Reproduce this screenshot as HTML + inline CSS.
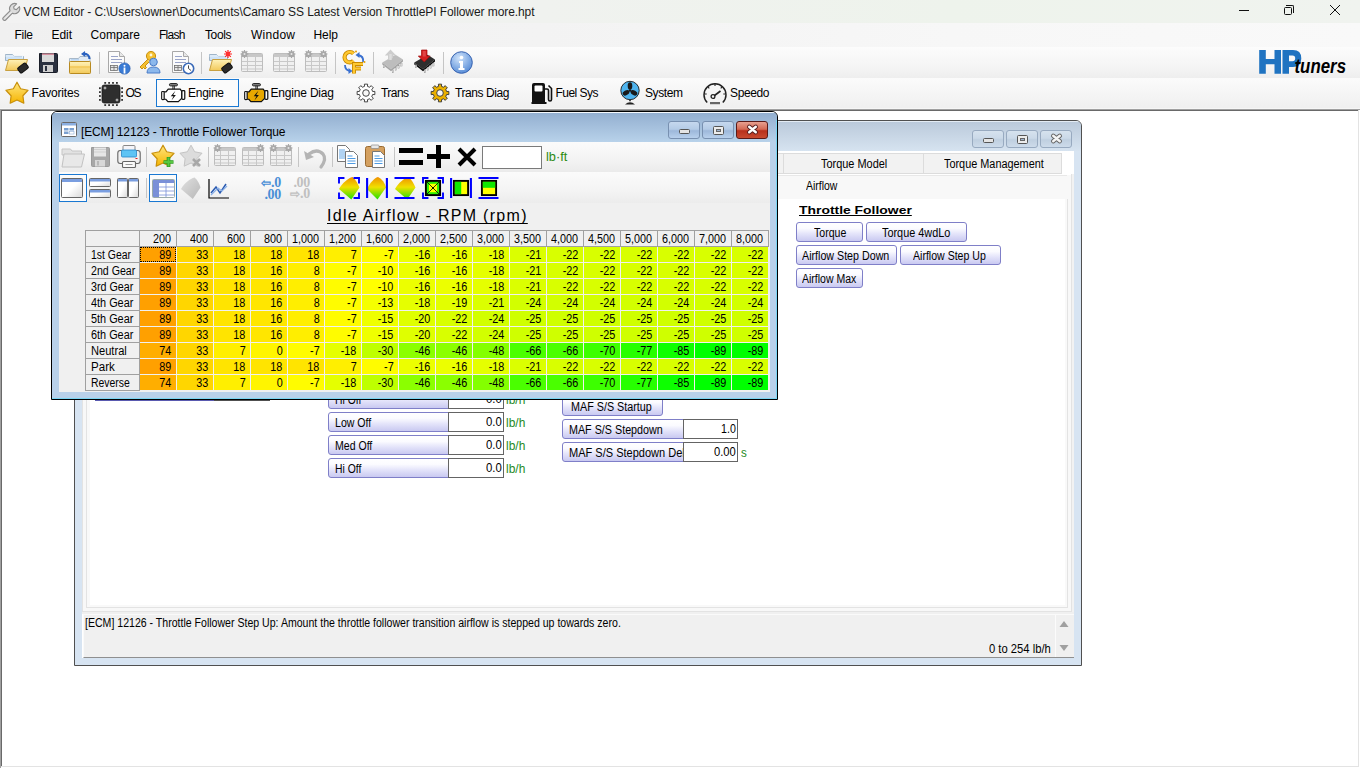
<!DOCTYPE html>
<html><head><meta charset="utf-8">
<style>
*{box-sizing:border-box}
html,body{margin:0;padding:0}
body{width:1360px;height:768px;overflow:hidden;position:relative;background:#fff;font-family:"Liberation Sans",sans-serif;color:#000}
.a{position:absolute}
.t12{font-size:12px;line-height:14px;white-space:nowrap}
.t11{font-size:11px;line-height:13px;white-space:nowrap}
svg{position:absolute;overflow:visible}
.sep{position:absolute;width:1px;background:#c5c5c5}
.btn{position:absolute;border:1px solid #7f7fc8;border-radius:3px;background:linear-gradient(#ffffff 0%,#fbfbff 30%,#e4e4fa 60%,#c9c9f1 100%);font-size:11px;line-height:17px;white-space:nowrap}
.lbl{position:absolute;border:1px solid #7f7fc8;border-radius:3px 0 0 3px;background:linear-gradient(#ffffff 0%,#fbfbff 30%,#e4e4fa 60%,#c9c9f1 100%);font-size:11px;line-height:17px;white-space:nowrap;padding-left:6px;overflow:hidden}
.inp{position:absolute;border:1px solid #646464;background:#fff;font-size:11px;line-height:15px;text-align:right;padding-right:3px;white-space:nowrap}
.unit{position:absolute;color:#1f8a1f;font-size:11px;line-height:14px;white-space:nowrap}
</style></head><body>
<svg width="0" height="0" style="position:absolute"><defs>
<linearGradient id="gfold" x1="0" y1="0" x2="0" y2="1"><stop offset="0" stop-color="#fff2b8"/><stop offset="1" stop-color="#f2c95a"/></linearGradient>
<linearGradient id="gfold2" x1="0" y1="0" x2="0" y2="1"><stop offset="0" stop-color="#ffe9a0"/><stop offset="1" stop-color="#f0c050"/></linearGradient>
<linearGradient id="gstar" x1="0" y1="0" x2="0" y2="1"><stop offset="0" stop-color="#ffe680"/><stop offset="1" stop-color="#f5b400"/></linearGradient>
<linearGradient id="gblue" x1="0" y1="0" x2="0" y2="1"><stop offset="0" stop-color="#a8c8f0"/><stop offset="1" stop-color="#3c78d0"/></linearGradient>
<linearGradient id="gthreed" x1="0" y1="0" x2="0" y2="1"><stop offset="0" stop-color="#f09000"/><stop offset="0.45" stop-color="#f0e000"/><stop offset="1" stop-color="#20e000"/></linearGradient>
<linearGradient id="ggray3d" x1="0" y1="0" x2="1" y2="1"><stop offset="0" stop-color="#e0e0e0"/><stop offset="1" stop-color="#b8b8b8"/></linearGradient>
<linearGradient id="gwin" x1="0" y1="0" x2="1" y2="1"><stop offset="0.5" stop-color="#ffffff"/><stop offset="1" stop-color="#d8d8d8"/></linearGradient>
<radialGradient id="ginfo" cx="0.4" cy="0.3" r="0.7"><stop offset="0" stop-color="#d0e4fb"/><stop offset="1" stop-color="#5b8fd8"/></radialGradient>
</defs></svg>
<!-- title bar -->
<div class="a" style="left:0;top:0;width:1360px;height:23px;background:linear-gradient(90deg,#f2f2f2 0%,#f0f2ef 40%,#eef3ec 70%,#f0f3ef 100%)"></div>
<svg style="left:1px;top:2px" width="20" height="20" viewBox="0 0 20 20"><path d="M2.2 15.6 L9 8.8 A5.2 5.2 0 0 1 15.6 1.8 L12.6 4.8 L13.2 7 L15.4 7.6 L18.4 4.6 A5.2 5.2 0 0 1 11.4 11.2 L4.6 18 A1.7 1.7 0 0 1 2.2 15.6 Z" fill="#dcdcdc" stroke="#8c8c8c" stroke-width="1.1" stroke-linejoin="round"/><path d="M4 16.5 L10.5 10" stroke="#f4f4f4" stroke-width="1"/></svg>
<div class="a" style="left:1239px;top:10px;width:10px;height:1px;background:#111"></div>
<div class="a" style="left:1284px;top:7px;width:8px;height:8px;border:1px solid #111;border-radius:1.5px"></div>
<div class="a" style="left:1286px;top:5px;width:8px;height:8px;border-top:1px solid #111;border-right:1px solid #111;border-top-right-radius:2px"></div>
<svg style="left:1330px;top:5px" width="10" height="10" viewBox="0 0 10 10"><path d="M0 0 L10 10 M10 0 L0 10" stroke="#111" stroke-width="1"/></svg>

<!-- menu bar -->
<div class="a" style="left:0;top:23px;width:1360px;height:24px;background:linear-gradient(90deg,#f0f0f0 0%,#f3f3f3 40%,#f7f7f7 70%,#f9f9f9 100%)"></div>

<!-- toolbar 1 -->
<div class="a" style="left:0;top:47px;width:1360px;height:31px;background:linear-gradient(#fcfcfc,#f5f5f5 60%,#eeeeee)"></div>
<!-- toolbar 2 -->
<div class="a" style="left:0;top:78px;width:1360px;height:31px;background:linear-gradient(#fbfbfb,#f4f4f4 60%,#efefef)"></div>
<div class="a" style="left:0;top:108px;width:1360px;height:1px;background:#f6f6f6"></div>
<div class="a" style="left:23.5px;top:5.0px;font:normal normal 12px/14px 'Liberation Sans',sans-serif;white-space:nowrap;letter-spacing:-0.077px;color:#1a1a1a;">VCM Editor - C:\Users\owner\Documents\Camaro SS Latest Version ThrottlePI Follower more.hpt</div><div class="a" style="left:14.5px;top:28.0px;font:normal normal 12px/14px 'Liberation Sans',sans-serif;white-space:nowrap;letter-spacing:-0.281px;">File</div><div class="a" style="left:51.5px;top:28.0px;font:normal normal 12px/14px 'Liberation Sans',sans-serif;white-space:nowrap;letter-spacing:-0.062px;">Edit</div><div class="a" style="left:90.5px;top:28.0px;font:normal normal 12px/14px 'Liberation Sans',sans-serif;white-space:nowrap;letter-spacing:0.023px;">Compare</div><div class="a" style="left:159.0px;top:28.0px;font:normal normal 12px/14px 'Liberation Sans',sans-serif;white-space:nowrap;letter-spacing:-0.711px;">Flash</div><div class="a" style="left:205.0px;top:28.0px;font:normal normal 12px/14px 'Liberation Sans',sans-serif;white-space:nowrap;letter-spacing:-0.379px;">Tools</div><div class="a" style="left:251.0px;top:28.0px;font:normal normal 12px/14px 'Liberation Sans',sans-serif;white-space:nowrap;letter-spacing:0.263px;">Window</div><div class="a" style="left:313.5px;top:28.0px;font:normal normal 12px/14px 'Liberation Sans',sans-serif;white-space:nowrap;letter-spacing:-0.062px;">Help</div><svg style="left:4px;top:50px" width="25" height="24" viewBox="0 0 25 24"><path d="M1.5 4.5 h7 l2 2 h9 v4 h-18 z" fill="#cfe3f7" stroke="#9fb4c8"/><path d="M1.5 6 h17 v2" fill="none" stroke="#eaf3fb"/><path d="M1.5 20.5 l3 -11 h19 l-3 11 z" fill="url(#gfold)" stroke="#c8a040"/><rect x="-5" y="-3.2" width="10" height="6.4" rx="1.5" fill="#2a2a2a" stroke="#111" transform="translate(19 18) rotate(-38)"/></svg>
<svg style="left:38px;top:52px" width="21" height="22" viewBox="0 0 21 22"><path d="M1.5 1.5 h17 a1 1 0 0 1 1 1 v17 a1 1 0 0 1 -1 1 h-16 a1 1 0 0 1 -1 -1 z" fill="#2b3140" stroke="#1a1e28"/><rect x="4" y="1.5" width="12" height="8.5" fill="#d9d9d9"/><rect x="4" y="1.5" width="12" height="1.5" fill="#d04060" opacity="0.5"/><rect x="5" y="13" width="10" height="7" fill="#cfcfcf"/><rect x="7" y="14" width="2" height="5" fill="#2b3140"/></svg>
<svg style="left:68px;top:51px" width="24" height="24" viewBox="0 0 24 24"><path d="M1.5 7.5 h9 l1.5 -2 h10 v6 h-20.5 z" fill="#dfeaf6" stroke="#a8b8c8"/><path d="M3 8.8 h8" stroke="#9cc4ec" stroke-width="0.8"/><rect x="1.5" y="10.5" width="21" height="12" rx="0.8" fill="url(#gfold)" stroke="#b88a20"/><rect x="2" y="15" width="20" height="2.2" fill="#f0c048" opacity="0.6"/><path d="M21.5 8 q0 -5.5 -6.5 -5" fill="none" stroke="#2a62c0" stroke-width="2.2"/><path d="M13 3 l4 -3 l0.3 6 z" fill="#2a62c0"/></svg>
<div class="sep" style="left:99px;top:52px;height:22px"></div><svg style="left:106px;top:50px" width="25" height="25" viewBox="0 0 25 25"><path d="M2.5 1.5 h11 l5 5 v16 h-16 z" fill="#fbfbfb" stroke="#a8a8a8"/><path d="M13.5 1.5 v5 h5" fill="#e8e8e8" stroke="#a8a8a8"/><g stroke="#9aa4c8" stroke-width="1"><path d="M5 6.5 h7 M5 9.5 h11 M5 12.5 h11"/></g><rect x="4.5" y="15.5" width="7" height="5" fill="#e6e6e6" stroke="#707070" stroke-width="0.8"/><path d="M4.5 17.5 h7 M8 15.5 v5" stroke="#707070" stroke-width="0.8"/><circle cx="18.5" cy="18.5" r="5.6" fill="#3a7bd5" stroke="#2a5eb0" stroke-width="0.8"/><rect x="17.6" y="17.5" width="1.8" height="6.04" fill="#fff"/><circle cx="18.5" cy="15.7" r="1" fill="#fff"/></svg>
<svg style="left:138px;top:50px" width="24" height="24" viewBox="0 0 24 24"><circle cx="13" cy="6" r="4.6" fill="#f5c030" stroke="#c89010"/><circle cx="13" cy="5" r="1.4" fill="#fff8d8"/><path d="M10 9 L2 17 l2 2 l1.5 -1.5 l1.5 1.5 l1.5 -1.5 l-1.5 -1.5 l4 -4" fill="#f5c030" stroke="#c89010" stroke-linejoin="round"/><circle cx="15.5" cy="12" r="3.8" fill="#8cb8ec" stroke="#4a7cc8"/><path d="M9 23 q0 -6 6.5 -6 q6.5 0 6.5 6 z" fill="#8cb8ec" stroke="#4a7cc8"/></svg>
<svg style="left:170px;top:50px" width="25" height="25" viewBox="0 0 25 25"><path d="M2.5 1.5 h11 l5 5 v16 h-16 z" fill="#fbfbfb" stroke="#a8a8a8"/><path d="M13.5 1.5 v5 h5" fill="#e8e8e8" stroke="#a8a8a8"/><g stroke="#9aa4c8" stroke-width="1"><path d="M5 6.5 h7 M5 9.5 h11 M5 12.5 h11"/></g><rect x="4.5" y="15.5" width="7" height="5" fill="#e6e6e6" stroke="#707070" stroke-width="0.8"/><path d="M4.5 17.5 h7 M8 15.5 v5" stroke="#707070" stroke-width="0.8"/><circle cx="18.5" cy="18.5" r="5.2" fill="#fff" stroke="#3a6ab8" stroke-width="1.6"/><path d="M18.5 15.379999999999999 V18.5 L21.1 20.58" stroke="#333" stroke-width="0.9" fill="none"/></svg>
<div class="sep" style="left:201px;top:52px;height:22px"></div><svg style="left:208px;top:50px" width="25" height="25" viewBox="0 0 25 25"><path d="M1.5 4.5 h7 l2 2 h9 v4 h-18 z" fill="#cfe3f7" stroke="#9fb4c8"/><path d="M1.5 6 h17 v2" fill="none" stroke="#eaf3fb"/><path d="M1.5 20.5 l3 -11 h19 l-3 11 z" fill="url(#gfold)" stroke="#c8a040"/><rect x="-5" y="-3.2" width="10" height="6.4" rx="1.5" fill="#2a2a2a" stroke="#111" transform="translate(19 18) rotate(-38)"/><g stroke="#ff2020" stroke-width="1.2"><path d="M20 0 v8 M16 4 h8 M17.2 1.2 l5.6 5.6 M22.8 1.2 l-5.6 5.6"/></g><circle cx="20" cy="4" r="2" fill="#ff3030"/></svg>
<svg style="left:240px;top:50px" width="24" height="24" viewBox="0 0 24 24"><rect x="1.5" y="3.5" width="21" height="18" rx="1" fill="#f0f0f0" stroke="#bdbdbd"/><rect x="2" y="4" width="20" height="3" fill="#c8c8c8"/><g stroke="#c8c8c8" stroke-width="1"><path d="M2 11.5 h20 M2 15.5 h20 M2 19 h20 M7.5 4 v17 M15.5 4 v17"/></g><circle cx="4.5" cy="4" r="2.6" fill="#b4b4b4" stroke="#999" stroke-width="0.6"/><g stroke="#a8a8a8" stroke-width="1.2"><path d="M0.5 4 h8 M4.5 0 v8 M1.7000000000000002 1.2000000000000002 l5.6 5.6 M7.3 1.2000000000000002 l-5.6 5.6"/></g><circle cx="4.5" cy="4" r="1" fill="#e8e8e8"/></svg>
<svg style="left:272px;top:50px" width="24" height="24" viewBox="0 0 24 24"><rect x="1.5" y="3.5" width="21" height="18" rx="1" fill="#f0f0f0" stroke="#bdbdbd"/><rect x="2" y="4" width="20" height="3" fill="#c8c8c8"/><g stroke="#c8c8c8" stroke-width="1"><path d="M2 11.5 h20 M2 15.5 h20 M2 19 h20 M7.5 4 v17 M15.5 4 v17"/></g><circle cx="19.5" cy="4" r="2.6" fill="#b4b4b4" stroke="#999" stroke-width="0.6"/><g stroke="#a8a8a8" stroke-width="1.2"><path d="M15.5 4 h8 M19.5 0 v8 M16.7 1.2000000000000002 l5.6 5.6 M22.3 1.2000000000000002 l-5.6 5.6"/></g><circle cx="19.5" cy="4" r="1" fill="#e8e8e8"/></svg>
<svg style="left:304px;top:50px" width="24" height="24" viewBox="0 0 24 24"><rect x="1.5" y="3.5" width="21" height="18" rx="1" fill="#f0f0f0" stroke="#bdbdbd"/><rect x="2" y="4" width="20" height="3" fill="#c8c8c8"/><g stroke="#c8c8c8" stroke-width="1"><path d="M2 11.5 h20 M2 15.5 h20 M2 19 h20 M7.5 4 v17 M15.5 4 v17"/></g><circle cx="4.5" cy="4" r="2.6" fill="#b4b4b4" stroke="#999" stroke-width="0.6"/><g stroke="#a8a8a8" stroke-width="1.2"><path d="M0.5 4 h8 M4.5 0 v8 M1.7000000000000002 1.2000000000000002 l5.6 5.6 M7.3 1.2000000000000002 l-5.6 5.6"/></g><circle cx="4.5" cy="4" r="1" fill="#e8e8e8"/><circle cx="19.5" cy="4" r="2.6" fill="#b4b4b4" stroke="#999" stroke-width="0.6"/><g stroke="#a8a8a8" stroke-width="1.2"><path d="M15.5 4 h8 M19.5 0 v8 M16.7 1.2000000000000002 l5.6 5.6 M22.3 1.2000000000000002 l-5.6 5.6"/></g><circle cx="19.5" cy="4" r="1" fill="#e8e8e8"/></svg>
<div class="sep" style="left:335px;top:52px;height:22px"></div><svg style="left:342px;top:50px" width="25" height="25" viewBox="0 0 25 25"><path d="M11.5 3.6 A5.2 5.2 0 1 0 11.5 10.8" fill="none" stroke="#c88a00" stroke-width="4.2"/><path d="M11.5 3.6 A5.2 5.2 0 1 0 11.5 10.8" fill="none" stroke="#ffc830" stroke-width="2.4"/><path d="M12 23.5 V14 H21 M12 18.5 H19" fill="none" stroke="#c88a00" stroke-width="4"/><path d="M12 23.5 V14 H21 M12 18.5 H19" fill="none" stroke="#ffc830" stroke-width="2.2"/><path d="M21 12 q1 -6 -5 -7" fill="none" stroke="#3a70d0" stroke-width="1.8"/><path d="M13.5 5 l4 -3 l0 6 z" fill="#3a70d0"/><path d="M3 15 q0 5 5 6" fill="none" stroke="#3a70d0" stroke-width="1.8"/><path d="M10.5 21 l-4 3 l0 -6 z" fill="#3a70d0"/><circle cx="14" cy="1.5" r="1" fill="#e8a000"/><circle cx="22.5" cy="12" r="1" fill="#e8a000"/></svg>
<div class="sep" style="left:373px;top:52px;height:22px"></div><svg style="left:381px;top:47px" width="24" height="26" viewBox="0 0 24 26"><path d="M1.3 15.5 L14.5 7.7 L22 12.6 L10 22.3 Z" fill="#bdbdbd"/><path d="M1.3 15.5 L10 22.3 V24.3 L1.3 17.5 Z" fill="#a4a4a4"/><path d="M10 22.3 L22 12.6 V14.6 L10 24.3 Z" fill="#a4a4a4"/><rect x="11.3" y="22.8" width="1.4" height="3" fill="#dedede" stroke="#9a9a9a" stroke-width="0.4"/><rect x="14.100000000000001" y="20.5" width="1.4" height="3" fill="#dedede" stroke="#9a9a9a" stroke-width="0.4"/><rect x="16.900000000000002" y="18.3" width="1.4" height="3" fill="#dedede" stroke="#9a9a9a" stroke-width="0.4"/><rect x="19.7" y="16.1" width="1.4" height="3" fill="#dedede" stroke="#9a9a9a" stroke-width="0.4"/><rect x="2.3" y="17.8" width="1.4" height="3" fill="#dedede" stroke="#9a9a9a" stroke-width="0.4"/><path d="M7 13 V8.5 H3.8 L9.5 2.5 L15.2 8.5 H12 V11 Z" fill="#cdcdcd"/><rect x="8.3" y="7" width="2.4" height="6" fill="#dedede"/></svg>
<svg style="left:413px;top:47px" width="24" height="26" viewBox="0 0 24 26"><path d="M1.3 15.5 L14.5 7.7 L22 12.6 L10 22.3 Z" fill="#2e2e2e"/><path d="M1.3 15.5 L10 22.3 V24.3 L1.3 17.5 Z" fill="#0a0a0a"/><path d="M10 22.3 L22 12.6 V14.6 L10 24.3 Z" fill="#0a0a0a"/><rect x="11.3" y="22.8" width="1.4" height="3" fill="#d8d8d8" stroke="#9a9a9a" stroke-width="0.4"/><rect x="14.100000000000001" y="20.5" width="1.4" height="3" fill="#d8d8d8" stroke="#9a9a9a" stroke-width="0.4"/><rect x="16.900000000000002" y="18.3" width="1.4" height="3" fill="#d8d8d8" stroke="#9a9a9a" stroke-width="0.4"/><rect x="19.7" y="16.1" width="1.4" height="3" fill="#d8d8d8" stroke="#9a9a9a" stroke-width="0.4"/><rect x="2.3" y="17.8" width="1.4" height="3" fill="#d8d8d8" stroke="#9a9a9a" stroke-width="0.4"/><path d="M8.5 3 h5.5 v6 h3.2 L11.25 15 L5.3 9 h3.2 Z" fill="#d42020" stroke="#a00c0c" stroke-width="0.7"/><rect x="9.8" y="4" width="3" height="5.5" fill="#e86060" opacity="0.6"/></svg>
<div class="sep" style="left:443px;top:52px;height:22px"></div><svg style="left:450px;top:51px" width="24" height="24" viewBox="0 0 24 24"><circle cx="11.5" cy="11.5" r="10.8" fill="url(#ginfo)" stroke="#3a64b0" stroke-width="1"/><circle cx="11.5" cy="6.5" r="1.8" fill="#fff"/><path d="M9 10 h4 v7 h1.5 v2 h-6 v-2 h1.5 v-5 h-1 z" fill="#fff"/></svg>
<svg style="left:0;top:0" width="1360" height="100" viewBox="0 0 1360 100"><path d="M1259.2 50.1 H1265.8 V58.9 H1274.5 V50.1 H1281 V73.8 H1274.5 V64.3 H1265.8 V73.8 H1259.2 Z" fill="#1f73c1"/><path d="M1282.5 50.1 H1293 Q1301.3 50.1 1301.3 58.5 Q1301.3 67 1293 67 H1289 V73.8 H1282.5 Z M1289 55.5 V61.2 H1292.5 Q1295.2 61.2 1295.2 58.35 Q1295.2 55.5 1292.5 55.5 Z" fill="#1f73c1" fill-rule="evenodd"/><text x="1294.5" y="73.4" font-family="Liberation Sans" font-weight="bold" font-style="italic" font-size="20" textLength="51.5" lengthAdjust="spacingAndGlyphs" fill="#000">tuners</text></svg><div class="a" style="left:156px;top:79px;width:83px;height:28px;border:1px solid #1a78d2;background:#fbfbfb"></div><svg style="left:5px;top:81px" width="24" height="24" viewBox="0 0 24 24"><polygon points="12.00,1.20 15.64,7.78 23.03,9.22 17.90,14.72 18.82,22.18 12.00,19.00 5.18,22.18 6.10,14.72 0.97,9.22 8.36,7.78" fill="url(#gstar)" stroke="#c8900c" stroke-width="1.2" stroke-linejoin="round"/></svg>
<div class="a" style="left:31.5px;top:86.0px;font:normal normal 12px/14px 'Liberation Sans',sans-serif;white-space:nowrap;letter-spacing:-0.170px;">Favorites</div><svg style="left:99px;top:82px" width="24" height="24" viewBox="0 0 24 24"><rect x="3" y="3" width="18" height="18" rx="2.2" fill="#2e2e2e" stroke="#1a1a1a" stroke-width="0.8"/><g fill="#333"><rect x="5.3" y="0" width="1.8" height="1.8"/><rect x="5.3" y="22.2" width="1.8" height="1.8"/><rect x="0" y="5.3" width="1.8" height="1.8"/><rect x="22.2" y="5.3" width="1.8" height="1.8"/><rect x="9.2" y="0" width="1.8" height="1.8"/><rect x="9.2" y="22.2" width="1.8" height="1.8"/><rect x="0" y="9.2" width="1.8" height="1.8"/><rect x="22.2" y="9.2" width="1.8" height="1.8"/><rect x="13.1" y="0" width="1.8" height="1.8"/><rect x="13.1" y="22.2" width="1.8" height="1.8"/><rect x="0" y="13.1" width="1.8" height="1.8"/><rect x="22.2" y="13.1" width="1.8" height="1.8"/><rect x="17.0" y="0" width="1.8" height="1.8"/><rect x="17.0" y="22.2" width="1.8" height="1.8"/><rect x="0" y="17.0" width="1.8" height="1.8"/><rect x="22.2" y="17.0" width="1.8" height="1.8"/></g><path d="M6 4.6 v2.8 M4.6 6 h2.8 M18 16.6 v2.8 M16.6 18 h2.8" stroke="#e0e0e0" stroke-width="0.9"/></svg>
<div class="a" style="left:125.5px;top:86.0px;font:normal normal 12px/14px 'Liberation Sans',sans-serif;white-space:nowrap;letter-spacing:-1.344px;">OS</div><svg style="left:161px;top:83px" width="25" height="20" viewBox="0 0 22.5 19.5" preserveAspectRatio="none"><path d="M2.5 8.7 H4.5 L6.5 6 H17.3 L18.6 8 V15 L15.6 18.2 H6.2 L4.2 15.8 H2.5 Z" fill="#ffffff" stroke="#111" stroke-width="1.1" stroke-linejoin="round"/><rect x="0.6" y="8.2" width="2.2" height="8" rx="0.8" fill="#fff" stroke="#111" stroke-width="1"/><rect x="18.8" y="7.4" width="2.6" height="8.6" rx="0.8" fill="#fff" stroke="#111" stroke-width="1.1"/><rect x="7.6" y="0.6" width="7.2" height="2.2" rx="1" fill="#8a8a8a" stroke="#111" stroke-width="0.9"/><path d="M10.7 2.8 V6 M12 2.8 V6" stroke="#111" stroke-width="0.8"/><path d="M13 7.6 L8.8 12.8 H11.2 L9.4 17 L13.4 11.6 H11 Z" fill="#111"/></svg><div class="a" style="left:188.0px;top:86.0px;font:normal normal 12px/14px 'Liberation Sans',sans-serif;white-space:nowrap;letter-spacing:-0.275px;">Engine</div><svg style="left:243.5px;top:83px" width="25" height="20" viewBox="0 0 22.5 19.5" preserveAspectRatio="none"><path d="M2.5 8.7 H4.5 L6.5 6 H17.3 L18.6 8 V15 L15.6 18.2 H6.2 L4.2 15.8 H2.5 Z" fill="#e8a800" stroke="#111" stroke-width="1.1" stroke-linejoin="round"/><rect x="0.6" y="8.2" width="2.2" height="8" rx="0.8" fill="#fff" stroke="#111" stroke-width="1"/><rect x="18.8" y="7.4" width="2.6" height="8.6" rx="0.8" fill="#fff" stroke="#111" stroke-width="1.1"/><rect x="7.6" y="0.6" width="7.2" height="2.2" rx="1" fill="#8a8a8a" stroke="#111" stroke-width="0.9"/><path d="M10.7 2.8 V6 M12 2.8 V6" stroke="#111" stroke-width="0.8"/><path d="M13 7.6 L8.8 12.8 H11.2 L9.4 17 L13.4 11.6 H11 Z" fill="#111"/></svg><div class="a" style="left:270.5px;top:86.0px;font:normal normal 12px/14px 'Liberation Sans',sans-serif;white-space:nowrap;letter-spacing:-0.189px;">Engine Diag</div><svg style="left:357px;top:84px" width="18" height="18" viewBox="0 0 18 18"><polygon points="17.85,7.39 17.85,10.61 15.65,10.44 14.72,12.68 16.40,14.12 14.12,16.40 12.68,14.72 10.44,15.65 10.61,17.85 7.39,17.85 7.56,15.65 5.32,14.72 3.88,16.40 1.60,14.12 3.28,12.68 2.35,10.44 0.15,10.61 0.15,7.39 2.35,7.56 3.28,5.32 1.60,3.88 3.88,1.60 5.32,3.28 7.56,2.35 7.39,0.15 10.61,0.15 10.44,2.35 12.68,3.28 14.12,1.60 16.40,3.88 14.72,5.32 15.65,7.56" fill="#ffffff" stroke="#333" stroke-width="0.9" stroke-linejoin="round"/><circle cx="9" cy="9" r="3.3" fill="#f8f8f8" stroke="#333" stroke-width="0.9"/></svg>
<div class="a" style="left:381.0px;top:86.0px;font:normal normal 12px/14px 'Liberation Sans',sans-serif;white-space:nowrap;letter-spacing:-0.559px;">Trans</div><svg style="left:431px;top:84px" width="18" height="18" viewBox="0 0 18 18"><polygon points="17.85,7.39 17.85,10.61 15.65,10.44 14.72,12.68 16.40,14.12 14.12,16.40 12.68,14.72 10.44,15.65 10.61,17.85 7.39,17.85 7.56,15.65 5.32,14.72 3.88,16.40 1.60,14.12 3.28,12.68 2.35,10.44 0.15,10.61 0.15,7.39 2.35,7.56 3.28,5.32 1.60,3.88 3.88,1.60 5.32,3.28 7.56,2.35 7.39,0.15 10.61,0.15 10.44,2.35 12.68,3.28 14.12,1.60 16.40,3.88 14.72,5.32 15.65,7.56" fill="#eab000" stroke="#333" stroke-width="0.9" stroke-linejoin="round"/><circle cx="9" cy="9" r="3.3" fill="#f8f8f8" stroke="#333" stroke-width="0.9"/></svg>
<div class="a" style="left:455.0px;top:86.0px;font:normal normal 12px/14px 'Liberation Sans',sans-serif;white-space:nowrap;letter-spacing:-0.417px;">Trans Diag</div><svg style="left:530px;top:82px" width="23" height="23" viewBox="0 0 23 23"><path d="M2 3 a2 2 0 0 1 2 -2 h9 a2 2 0 0 1 2 2 v17 h1.5 v2 h-15 v-2 h0.5 z" fill="#111"/><rect x="4.5" y="3.5" width="8" height="6" rx="1" fill="#fff"/><path d="M15 7 h2 a1.5 1.5 0 0 1 1.5 1.5 v9 a1.5 1.5 0 0 0 3 0 v-11 l-3 -3" fill="none" stroke="#111" stroke-width="1.6"/></svg>
<div class="a" style="left:555.5px;top:86.0px;font:normal normal 12px/14px 'Liberation Sans',sans-serif;white-space:nowrap;letter-spacing:-0.527px;">Fuel Sys</div><svg style="left:620px;top:81px" width="20" height="24" viewBox="0 0 20 24"><circle cx="10" cy="9.5" r="9.2" fill="#4fb4ee" stroke="#1a1a1a" stroke-width="0.9"/><ellipse cx="10" cy="4.9" rx="2.3" ry="3.6" fill="#1a1a1a" transform="rotate(0 10 9.5)"/><ellipse cx="10" cy="4.9" rx="2.3" ry="3.6" fill="#1a1a1a" transform="rotate(120 10 9.5)"/><ellipse cx="10" cy="4.9" rx="2.3" ry="3.6" fill="#1a1a1a" transform="rotate(240 10 9.5)"/><circle cx="10" cy="9.5" r="1.3" fill="#1a1a1a"/><path d="M10 18.7 v1.5" stroke="#222" stroke-width="1.6"/><path d="M5 23.5 q5 -4.5 10 0 z" fill="#222"/></svg>
<div class="a" style="left:645.0px;top:86.0px;font:normal normal 12px/14px 'Liberation Sans',sans-serif;white-space:nowrap;letter-spacing:-0.403px;">System</div><svg style="left:703px;top:82px" width="24" height="24" viewBox="0 0 24 24"><path d="M4.2 20.5 A11 11 0 1 1 19.8 20.5" fill="none" stroke="#222" stroke-width="1.5"/><g stroke="#222" stroke-width="1.1"><path d="M12 1.8 v2.2 M4.8 4.8 l1.5 1.5 M19.2 4.8 l-1.5 1.5 M1.5 12 h2.2 M22.5 12 h-2.2"/></g><circle cx="10" cy="14.5" r="1.9" fill="none" stroke="#222" stroke-width="1.3"/><path d="M11.5 13.5 l6 -4.5" stroke="#222" stroke-width="1.6"/><rect x="7" y="20" width="10" height="2.2" fill="#666"/></svg>
<div class="a" style="left:730.0px;top:86.0px;font:normal normal 12px/14px 'Liberation Sans',sans-serif;white-space:nowrap;letter-spacing:-0.375px;">Speedo</div><div class="a" style="left:0;top:109px;width:1360px;height:1px;background:#a0a0a0"></div><div class="a" style="left:0;top:110px;width:1359px;height:1px;background:#696969"></div><div class="a" style="left:0;top:109px;width:1px;height:659px;background:#a0a0a0"></div><div class="a" style="left:1px;top:110px;width:1px;height:657px;background:#696969"></div><div class="a" style="left:1358px;top:110px;width:1px;height:657px;background:#e3e3e3"></div><div class="a" style="left:1px;top:766px;width:1358px;height:1px;background:#e3e3e3"></div><div class="a" style="left:74px;top:120px;width:1008px;height:546px;border:1px solid #505050;border-radius:6px 6px 0 0;background:#d7e4f2;overflow:hidden"><div class="a" style="left:0;top:0;width:1006px;height:1px;background:#e4ecf4"></div><div class="a" style="left:0;top:1px;width:1006px;height:29px;background:linear-gradient(#bbcadb,#d6e3f0)"></div></div><div class="a" style="left:972px;top:130px;width:32px;height:18px;border:1px solid #98aac0;border-radius:3px;background:linear-gradient(#d6e2ee 0%,#cbd9e8 45%,#bfcfe0 55%,#cddbea 100%)"><div class="a" style="left:10px;top:7px;width:11px;height:5px;border:1px solid #555;border-radius:1.5px;background:#e4e4e4"></div></div><div class="a" style="left:1006px;top:130px;width:32px;height:18px;border:1px solid #98aac0;border-radius:3px;background:linear-gradient(#d6e2ee 0%,#cbd9e8 45%,#bfcfe0 55%,#cddbea 100%)"><div class="a" style="left:10px;top:4px;width:11px;height:9px;border:1px solid #555;border-radius:1.5px;background:#ececec"><div class="a" style="left:2px;top:2px;width:5px;height:3px;border:1px solid #666;background:#9fb4d0"></div></div></div><div class="a" style="left:1040px;top:130px;width:32px;height:18px;border:1px solid #98aac0;border-radius:3px;background:linear-gradient(#d6e2ee 0%,#cbd9e8 45%,#bfcfe0 55%,#cddbea 100%)"><svg style="left:10px;top:3px" width="11" height="9" viewBox="0 0 11 9"><path d="M2.2 1.8 L8.8 7.2 M8.8 1.8 L2.2 7.2" stroke="#666" stroke-width="4.4" stroke-linecap="round"/><path d="M2.2 1.8 L8.8 7.2 M8.8 1.8 L2.2 7.2" stroke="#f4f4f4" stroke-width="2.4" stroke-linecap="round"/></svg></div><div class="a" style="left:82px;top:151px;width:992px;height:507px;background:#fff"></div><div class="a" style="left:82px;top:174px;width:990px;height:438px;background:#f8f8f8;border:1px solid #e3e3e3;border-top:none"></div><div class="a" style="left:1072px;top:174px;width:2px;height:440px;background:#f2f2f2"></div><div class="a" style="left:82px;top:612px;width:992px;height:2px;background:#f0f0f0"></div><div class="a" style="left:82px;top:153px;width:980px;height:21px;background:#f2f2f2;border-top:1px solid #dcdcdc;border-bottom:1px solid #dcdcdc"></div><div class="a" style="left:783px;top:154px;width:1px;height:19px;background:#dcdcdc"></div><div class="a" style="left:923px;top:154px;width:1px;height:19px;background:#dcdcdc"></div><div class="a" style="left:1061px;top:154px;width:1px;height:19px;background:#dcdcdc"></div><div class="a" style="left:821.0px;top:157.0px;font:normal normal 12px/14px 'Liberation Sans',sans-serif;white-space:nowrap;transform:scaleX(0.9117);transform-origin:0 0;">Torque Model</div><div class="a" style="left:943.5px;top:157.0px;font:normal normal 12px/14px 'Liberation Sans',sans-serif;white-space:nowrap;transform:scaleX(0.9066);transform-origin:0 0;">Torque Management</div><div class="a" style="left:83px;top:174px;width:988px;height:1px;background:#fff"></div><div class="a" style="left:83px;top:175px;width:984px;height:24px;background:#f8f8f8;border-top:1px solid #e8e8e8"></div><div class="a" style="left:806.0px;top:179.0px;font:normal normal 12px/14px 'Liberation Sans',sans-serif;white-space:nowrap;transform:scaleX(0.8691);transform-origin:0 0;">Airflow</div><div class="a" style="left:86px;top:199px;width:982px;height:409px;background:#f9f9f9;border:1px solid #e3e3e3;border-top:none"></div><div class="a" style="left:90px;top:199px;width:975px;height:406px;background:#fff"></div><div class="a" style="left:799.0px;top:203.5px;font:normal bold 11.5px/13.5px 'Liberation Sans',sans-serif;white-space:nowrap;text-decoration:underline;text-decoration-skip-ink:none;transform:scaleX(1.2092);transform-origin:0 0;">Throttle Follower</div><div class="btn" style="left:796px;top:222px;width:67px;height:20px"></div><div class="a" style="left:813.5px;top:226.0px;font:normal normal 12px/14px 'Liberation Sans',sans-serif;white-space:nowrap;transform:scaleX(0.8800);transform-origin:0 0;">Torque</div><div class="btn" style="left:866px;top:222px;width:101px;height:20px"></div><div class="a" style="left:881.5px;top:226.0px;font:normal normal 12px/14px 'Liberation Sans',sans-serif;white-space:nowrap;transform:scaleX(0.9059);transform-origin:0 0;">Torque 4wdLo</div><div class="btn" style="left:796px;top:245px;width:101px;height:20px"></div><div class="a" style="left:801.5px;top:249.0px;font:normal normal 12px/14px 'Liberation Sans',sans-serif;white-space:nowrap;transform:scaleX(0.8904);transform-origin:0 0;">Airflow Step Down</div><div class="btn" style="left:900px;top:245px;width:101px;height:20px"></div><div class="a" style="left:913.0px;top:249.0px;font:normal normal 12px/14px 'Liberation Sans',sans-serif;white-space:nowrap;transform:scaleX(0.8803);transform-origin:0 0;">Airflow Step Up</div><div class="btn" style="left:796px;top:268px;width:67px;height:20px"></div><div class="a" style="left:801.5px;top:272.0px;font:normal normal 12px/14px 'Liberation Sans',sans-serif;white-space:nowrap;transform:scaleX(0.8756);transform-origin:0 0;">Airflow Max</div><div class="a" style="left:95px;top:399px;width:119px;height:2px;background:#5a5ab0"></div><div class="a" style="left:214px;top:399px;width:56px;height:2px;background:#505050"></div><div class="lbl" style="left:328px;top:389px;width:121px;height:20px"></div><div class="a" style="left:329px;top:390px;width:119px;height:18px;overflow:hidden"><div class="a" style="left:6.0px;top:3.0px;font:normal normal 12px/14px 'Liberation Sans',sans-serif;white-space:nowrap;transform:scaleX(0.8636);transform-origin:0 0;">Hi Off</div></div><div class="inp" style="left:448px;top:389px;width:56px;height:20px"></div><div class="a" style="left:485.5px;top:391.5px;font:normal normal 12px/14px 'Liberation Sans',sans-serif;white-space:nowrap;transform:scaleX(0.9468);transform-origin:0 0;">0.0</div><div class="a" style="left:506.0px;top:392.5px;font:normal normal 12px/14px 'Liberation Sans',sans-serif;white-space:nowrap;color:#1e8a1e;transform:scaleX(0.9969);transform-origin:0 0;">lb/h</div><div class="lbl" style="left:328px;top:412px;width:121px;height:20px"></div><div class="a" style="left:329px;top:413px;width:119px;height:18px;overflow:hidden"><div class="a" style="left:6.0px;top:3.0px;font:normal normal 12px/14px 'Liberation Sans',sans-serif;white-space:nowrap;transform:scaleX(0.8823);transform-origin:0 0;">Low Off</div></div><div class="inp" style="left:448px;top:412px;width:56px;height:20px"></div><div class="a" style="left:485.5px;top:414.5px;font:normal normal 12px/14px 'Liberation Sans',sans-serif;white-space:nowrap;transform:scaleX(0.9468);transform-origin:0 0;">0.0</div><div class="a" style="left:506.0px;top:415.5px;font:normal normal 12px/14px 'Liberation Sans',sans-serif;white-space:nowrap;color:#1e8a1e;transform:scaleX(0.9969);transform-origin:0 0;">lb/h</div><div class="lbl" style="left:328px;top:435px;width:121px;height:20px"></div><div class="a" style="left:329px;top:436px;width:119px;height:18px;overflow:hidden"><div class="a" style="left:6.0px;top:3.0px;font:normal normal 12px/14px 'Liberation Sans',sans-serif;white-space:nowrap;transform:scaleX(0.8783);transform-origin:0 0;">Med Off</div></div><div class="inp" style="left:448px;top:435px;width:56px;height:20px"></div><div class="a" style="left:485.5px;top:437.5px;font:normal normal 12px/14px 'Liberation Sans',sans-serif;white-space:nowrap;transform:scaleX(0.9468);transform-origin:0 0;">0.0</div><div class="a" style="left:506.0px;top:438.5px;font:normal normal 12px/14px 'Liberation Sans',sans-serif;white-space:nowrap;color:#1e8a1e;transform:scaleX(0.9969);transform-origin:0 0;">lb/h</div><div class="lbl" style="left:328px;top:458px;width:121px;height:20px"></div><div class="a" style="left:329px;top:459px;width:119px;height:18px;overflow:hidden"><div class="a" style="left:6.0px;top:3.0px;font:normal normal 12px/14px 'Liberation Sans',sans-serif;white-space:nowrap;transform:scaleX(0.8636);transform-origin:0 0;">Hi Off</div></div><div class="inp" style="left:448px;top:458px;width:56px;height:20px"></div><div class="a" style="left:485.5px;top:460.5px;font:normal normal 12px/14px 'Liberation Sans',sans-serif;white-space:nowrap;transform:scaleX(0.9468);transform-origin:0 0;">0.0</div><div class="a" style="left:506.0px;top:461.5px;font:normal normal 12px/14px 'Liberation Sans',sans-serif;white-space:nowrap;color:#1e8a1e;transform:scaleX(0.9969);transform-origin:0 0;">lb/h</div><div class="btn" style="left:562px;top:396px;width:101px;height:20px"></div><div class="a" style="left:571.0px;top:400.0px;font:normal normal 12px/14px 'Liberation Sans',sans-serif;white-space:nowrap;transform:scaleX(0.8975);transform-origin:0 0;">MAF S/S Startup</div><div class="lbl" style="left:562px;top:419px;width:122px;height:20px"></div><div class="a" style="left:563px;top:420px;width:120px;height:18px;overflow:hidden"><div class="a" style="left:6.0px;top:3.0px;font:normal normal 12px/14px 'Liberation Sans',sans-serif;white-space:nowrap;transform:scaleX(0.8957);transform-origin:0 0;">MAF S/S Stepdown</div></div><div class="inp" style="left:683px;top:419px;width:55px;height:20px"></div><div class="a" style="left:720.5px;top:421.5px;font:normal normal 12px/14px 'Liberation Sans',sans-serif;white-space:nowrap;transform:scaleX(0.8869);transform-origin:0 0;">1.0</div><div class="lbl" style="left:562px;top:442px;width:122px;height:20px"></div><div class="a" style="left:563px;top:443px;width:120px;height:18px;overflow:hidden"><div class="a" style="left:6.0px;top:3.0px;font:normal normal 12px/14px 'Liberation Sans',sans-serif;white-space:nowrap;transform:scaleX(0.9186);transform-origin:0 0;">MAF S/S Stepdown Del</div></div><div class="inp" style="left:683px;top:442px;width:55px;height:20px"></div><div class="a" style="left:713.5px;top:444.5px;font:normal normal 12px/14px 'Liberation Sans',sans-serif;white-space:nowrap;transform:scaleX(0.9332);transform-origin:0 0;">0.00</div><div class="a" style="left:740.5px;top:445.5px;font:normal normal 12px/14px 'Liberation Sans',sans-serif;white-space:nowrap;color:#1e8a1e;transform:scaleX(0.9667);transform-origin:0 0;">s</div><div class="a" style="left:83px;top:614px;width:991px;height:44px;background:#f0f0f0;border-top:1px solid #fafafa;border-left:1px solid #fafafa;border-bottom:1px solid #8f8f8f"></div><div class="a" style="left:1055px;top:615px;width:1px;height:42px;background:#fbfbfb"></div><div class="a" style="left:85.0px;top:616.0px;font:normal normal 12px/14px 'Liberation Sans',sans-serif;white-space:nowrap;transform:scaleX(0.8802);transform-origin:0 0;">[ECM] 12126 - Throttle Follower Step Up: Amount the throttle follower transition airflow is stepped up towards zero.</div><div class="a" style="left:989.0px;top:642.0px;font:normal normal 12px/14px 'Liberation Sans',sans-serif;white-space:nowrap;transform:scaleX(0.9355);transform-origin:0 0;">0 to 254 lb/h</div><svg style="left:1059px;top:620px" width="10" height="8" viewBox="0 0 10 8"><path d="M0.5 7 L5 1 L9.5 7 z" fill="#a0a0a0"/></svg><svg style="left:1059px;top:644px" width="10" height="8" viewBox="0 0 10 8"><path d="M0.5 1 L5 7 L9.5 1 z" fill="#a0a0a0"/></svg><div class="a" style="left:51px;top:111px;width:727px;height:289px;border:1px solid #000;border-radius:6px 6px 0 0;background:#b9d1ea;overflow:hidden"><div class="a" style="left:0;top:0;width:725px;height:1px;background:#f4f8fc"></div><div class="a" style="left:0;top:1px;width:725px;height:29px;background:linear-gradient(#93afd0,#b8d2ea)"></div><div class="a" style="left:724px;top:8px;width:1px;height:279px;background:#7ad6f4"></div><div class="a" style="left:0;top:286px;width:725px;height:1px;background:#7ad6f4"></div></div><svg style="left:61px;top:122px" width="16" height="15" viewBox="0 0 16 15"><rect x="0.5" y="0.5" width="15" height="14" rx="1" fill="#fff" stroke="#6a6a6a"/><rect x="1" y="1" width="14" height="2.5" fill="#8aaee0"/><rect x="3" y="6" width="4.5" height="2.5" fill="#7aa0d0"/><rect x="8.5" y="6" width="4.5" height="2.5" fill="#7aa0d0"/><rect x="3" y="9.5" width="4.5" height="2.5" fill="#7aa0d0"/><rect x="8.5" y="9.5" width="4.5" height="2.5" fill="#fff" stroke="#7aa0d0" stroke-width="0.5"/></svg><div class="a" style="left:81.0px;top:124.5px;font:normal normal 12px/14px 'Liberation Sans',sans-serif;white-space:nowrap;letter-spacing:-0.139px;">[ECM] 12123 - Throttle Follower Torque</div><div class="a" style="left:668px;top:121px;width:32px;height:18px;border:1px solid #7890b0;border-radius:3px;background:linear-gradient(#c6d8ee 0%,#b4cbe6 45%,#9db8da 55%,#b8d0ec 100%)"><div class="a" style="left:10px;top:7px;width:11px;height:5px;border:1px solid #555;border-radius:1.5px;background:#e4e4e4"></div></div><div class="a" style="left:702px;top:121px;width:32px;height:18px;border:1px solid #7890b0;border-radius:3px;background:linear-gradient(#c6d8ee 0%,#b4cbe6 45%,#9db8da 55%,#b8d0ec 100%)"><div class="a" style="left:10px;top:4px;width:11px;height:9px;border:1px solid #555;border-radius:1.5px;background:#ececec"><div class="a" style="left:2px;top:2px;width:5px;height:3px;border:1px solid #666;background:#9fb4d0"></div></div></div><div class="a" style="left:736px;top:121px;width:32px;height:18px;border:1px solid #5a1a18;border-radius:3px;background:linear-gradient(#e8a090 0%,#d46a55 45%,#b8301c 55%,#c84a30 100%)"><svg style="left:10px;top:3px" width="11" height="9" viewBox="0 0 11 9"><path d="M2.2 1.8 L8.8 7.2 M8.8 1.8 L2.2 7.2" stroke="#5a2020" stroke-width="4.4" stroke-linecap="round"/><path d="M2.2 1.8 L8.8 7.2 M8.8 1.8 L2.2 7.2" stroke="#fff" stroke-width="2.4" stroke-linecap="round"/></svg></div><div class="a" style="left:59px;top:142px;width:711px;height:30px;background:linear-gradient(#fbfbfb,#f3f3f3 60%,#ebebeb)"></div><div class="a" style="left:59px;top:172px;width:711px;height:31px;background:linear-gradient(#fbfbfb,#f4f4f4 60%,#ececec)"></div><div class="a" style="left:59px;top:203px;width:711px;height:189px;background:#f0f0f0"></div><svg style="left:61px;top:146px" width="25" height="23" viewBox="0 0 25 23"><path d="M1 3 h8.5 l1.5 2 h9.5 v4 h-19.5 z" fill="#e2e2e2" stroke="#c6c6c6" stroke-linejoin="round"/><path d="M1 21 l2 -13 h20.5 l-3 13 z" fill="#e8e8e8" stroke="#c2c2c2" stroke-linejoin="round"/></svg>
<svg style="left:90px;top:146px" width="21" height="22" viewBox="0 0 21 22"><path d="M1.5 1.5 h17 a1 1 0 0 1 1 1 v17 a1 1 0 0 1 -1 1 h-16 a1 1 0 0 1 -1 -1 z" fill="#a8a8a8" stroke="#9a9a9a"/><rect x="4" y="1.5" width="12" height="9" fill="#e6e6e6"/><rect x="4" y="3" width="12" height="1" fill="#d0d0d0"/><rect x="4" y="5.5" width="12" height="1" fill="#d0d0d0"/><rect x="5" y="14" width="10" height="6.5" fill="#d8d8d8"/><rect x="7" y="15" width="2" height="4.5" fill="#b8b8b8"/></svg>
<svg style="left:117px;top:145px" width="24" height="23" viewBox="0 0 24 23"><rect x="6" y="0.5" width="12" height="7" rx="1" fill="#f4f4f8" stroke="#888"/><rect x="0.8" y="5.5" width="22.4" height="13" rx="2.5" fill="#f0f0f0" stroke="#666" stroke-width="1.1"/><rect x="4.5" y="5" width="15" height="7" rx="1" fill="#5ec4f4" stroke="#2a86c8" stroke-width="0.8"/><rect x="18.5" y="13" width="2" height="1" fill="#e02020"/><rect x="5.5" y="16.5" width="13" height="6" rx="1" fill="#fafafa" stroke="#666" stroke-width="1.1"/><path d="M8.5 19.5 h7" stroke="#999"/></svg>
<div class="sep" style="left:146px;top:147px;height:20px"></div><svg style="left:151px;top:144px" width="24" height="24" viewBox="0 0 24 24"><polygon points="12.00,1.20 15.64,7.78 23.03,9.22 17.90,14.72 18.82,22.18 12.00,19.00 5.18,22.18 6.10,14.72 0.97,9.22 8.36,7.78" fill="url(#gstar)" stroke="#c8900c" stroke-width="1.2" stroke-linejoin="round"/><path d="M17.5 13 v10 M12.5 18 h10" stroke="#2a9a20" stroke-width="3.6"/><path d="M17.5 13.5 v9 M13 18 h9" stroke="#56c840" stroke-width="2"/></svg>
<svg style="left:179px;top:144px" width="24" height="24" viewBox="0 0 24 24"><polygon points="12.00,1.20 15.64,7.78 23.03,9.22 17.90,14.72 18.82,22.18 12.00,19.00 5.18,22.18 6.10,14.72 0.97,9.22 8.36,7.78" fill="#dcdcdc" stroke="#c4c4c4" stroke-linejoin="round"/><path d="M14 15 l7 7 M21 15 l-7 7" stroke="#a8a8a8" stroke-width="2.6"/></svg>
<div class="sep" style="left:208px;top:147px;height:20px"></div><svg style="left:213px;top:144px" width="24" height="24" viewBox="0 0 24 24"><rect x="1.5" y="3.5" width="21" height="18" rx="1" fill="#f0f0f0" stroke="#bdbdbd"/><rect x="2" y="4" width="20" height="3" fill="#c8c8c8"/><g stroke="#c8c8c8" stroke-width="1"><path d="M2 11.5 h20 M2 15.5 h20 M2 19 h20 M7.5 4 v17 M15.5 4 v17"/></g><circle cx="4.5" cy="4" r="2.6" fill="#b4b4b4" stroke="#999" stroke-width="0.6"/><g stroke="#a8a8a8" stroke-width="1.2"><path d="M0.5 4 h8 M4.5 0 v8 M1.7000000000000002 1.2000000000000002 l5.6 5.6 M7.3 1.2000000000000002 l-5.6 5.6"/></g><circle cx="4.5" cy="4" r="1" fill="#e8e8e8"/></svg>
<svg style="left:241px;top:144px" width="24" height="24" viewBox="0 0 24 24"><rect x="1.5" y="3.5" width="21" height="18" rx="1" fill="#f0f0f0" stroke="#bdbdbd"/><rect x="2" y="4" width="20" height="3" fill="#c8c8c8"/><g stroke="#c8c8c8" stroke-width="1"><path d="M2 11.5 h20 M2 15.5 h20 M2 19 h20 M7.5 4 v17 M15.5 4 v17"/></g><circle cx="19.5" cy="4" r="2.6" fill="#b4b4b4" stroke="#999" stroke-width="0.6"/><g stroke="#a8a8a8" stroke-width="1.2"><path d="M15.5 4 h8 M19.5 0 v8 M16.7 1.2000000000000002 l5.6 5.6 M22.3 1.2000000000000002 l-5.6 5.6"/></g><circle cx="19.5" cy="4" r="1" fill="#e8e8e8"/></svg>
<svg style="left:269px;top:144px" width="24" height="24" viewBox="0 0 24 24"><rect x="1.5" y="3.5" width="21" height="18" rx="1" fill="#f0f0f0" stroke="#bdbdbd"/><rect x="2" y="4" width="20" height="3" fill="#c8c8c8"/><g stroke="#c8c8c8" stroke-width="1"><path d="M2 11.5 h20 M2 15.5 h20 M2 19 h20 M7.5 4 v17 M15.5 4 v17"/></g><circle cx="4.5" cy="4" r="2.6" fill="#b4b4b4" stroke="#999" stroke-width="0.6"/><g stroke="#a8a8a8" stroke-width="1.2"><path d="M0.5 4 h8 M4.5 0 v8 M1.7000000000000002 1.2000000000000002 l5.6 5.6 M7.3 1.2000000000000002 l-5.6 5.6"/></g><circle cx="4.5" cy="4" r="1" fill="#e8e8e8"/><circle cx="19.5" cy="4" r="2.6" fill="#b4b4b4" stroke="#999" stroke-width="0.6"/><g stroke="#a8a8a8" stroke-width="1.2"><path d="M15.5 4 h8 M19.5 0 v8 M16.7 1.2000000000000002 l5.6 5.6 M22.3 1.2000000000000002 l-5.6 5.6"/></g><circle cx="19.5" cy="4" r="1" fill="#e8e8e8"/></svg>
<div class="sep" style="left:298px;top:147px;height:20px"></div><svg style="left:303px;top:145px" width="24" height="24" viewBox="0 0 24 24"><path d="M6 9 q8 -6 14 0 q4 5 -2 13" fill="none" stroke="#b4b4b4" stroke-width="3.2" stroke-linecap="round"/><path d="M1 6 l2 9 l8 -3 z" fill="#b4b4b4"/></svg>
<div class="sep" style="left:332px;top:147px;height:20px"></div><svg style="left:337px;top:145px" width="24" height="24" viewBox="0 0 24 24"><path d="M0.5 0.5 h8 l4 4 v12 h-12 z" fill="#fff" stroke="#777"/><g stroke="#3a90e0" stroke-width="0.8"><path d="M2 5 h6 M2 7 h8 M2 9 h8 M2 11 h8 M2 13 h8"/></g><path d="M8.5 6.5 h8 l4 4 v12 h-12 z" fill="#fff" stroke="#777"/><g stroke="#3a90e0" stroke-width="0.9"><path d="M10.5 11 h5 M10.5 13.5 h8 M10.5 16 h8 M10.5 18.5 h8"/></g></svg>
<svg style="left:365px;top:145px" width="24" height="24" viewBox="0 0 24 24"><rect x="0.5" y="1.5" width="19" height="20" rx="2" fill="#d4a060" stroke="#9a6a30"/><rect x="6" y="0" width="8" height="3.5" rx="1" fill="#e8e8e8" stroke="#888" stroke-width="0.7"/><path d="M7.5 6.5 h8 l4 4 v12 h-12 z" fill="#fff" stroke="#777"/><g stroke="#3a90e0" stroke-width="0.9"><path d="M9.5 11 h5 M9.5 13.5 h8 M9.5 16 h8 M9.5 18.5 h8"/></g></svg>
<div class="sep" style="left:394px;top:147px;height:20px"></div><div class="a" style="left:399px;top:148px;width:24px;height:5px;background:#000"></div><div class="a" style="left:399px;top:160px;width:24px;height:5px;background:#000"></div><div class="a" style="left:427px;top:153.5px;width:23px;height:5px;background:#000"></div><div class="a" style="left:436px;top:145px;width:5px;height:23px;background:#000"></div><svg style="left:457px;top:148px" width="20" height="18" viewBox="0 0 20 18"><path d="M2 1 L18 17 M18 1 L2 17" stroke="#000" stroke-width="4"/></svg><div class="a" style="left:482px;top:146px;width:60px;height:23px;border:1px solid #7a7a7a;background:#fff"></div><div class="a" style="left:546.0px;top:150.0px;font:normal normal 12px/14px 'Liberation Sans',sans-serif;white-space:nowrap;color:#2a8a10;transform:scaleX(1.0642);transform-origin:0 0;">lb·ft</div><div class="a" style="left:59px;top:174px;width:28px;height:28px;border:1px solid #1a78d2;background:#fbfbfb"></div><div class="a" style="left:149px;top:174px;width:28px;height:28px;border:1px solid #1a78d2;background:#fbfbfb"></div><svg style="left:61px;top:178px" width="22" height="20" viewBox="0 0 22 20"><rect x="0.5" y="0.5" width="21" height="19" rx="1" fill="url(#gwin)" stroke="#666"/><rect x="1" y="1" width="20" height="3" fill="#7a9ee0"/></svg>
<svg style="left:89px;top:178px" width="22" height="20" viewBox="0 0 22 20"><rect x="0.5" y="0.5" width="21" height="8" rx="1" fill="url(#gwin)" stroke="#666"/><rect x="1" y="1" width="20" height="2.5" fill="#7a9ee0"/><rect x="0.5" y="11.5" width="21" height="8" rx="1" fill="url(#gwin)" stroke="#666"/><rect x="1" y="12" width="20" height="2.5" fill="#7a9ee0"/></svg>
<svg style="left:117px;top:178px" width="22" height="20" viewBox="0 0 22 20"><rect x="0.5" y="0.5" width="10" height="19" rx="1" fill="url(#gwin)" stroke="#666"/><rect x="1" y="1" width="9" height="2.5" fill="#7a9ee0"/><rect x="11.5" y="0.5" width="10" height="19" rx="1" fill="url(#gwin)" stroke="#666"/><rect x="12" y="1" width="9" height="2.5" fill="#7a9ee0"/></svg>
<div class="sep" style="left:146px;top:178px;height:20px"></div><svg style="left:152px;top:179px" width="23" height="19" viewBox="0 0 23 19"><rect x="0.5" y="0.5" width="22" height="18" rx="1" fill="#fff" stroke="#9aa"/><rect x="1" y="1" width="21" height="3" fill="#7a90d8"/><rect x="1" y="1" width="6" height="17" fill="#7a90d8"/><g stroke="#7a90d8" stroke-width="0.8"><path d="M1 8 h21 M1 12 h21 M1 16 h21 M14 1 v17"/></g></svg>
<svg style="left:180px;top:177px" width="22" height="22" viewBox="0 0 22 22"><path d="M14.6 0.5 C10 1.5 4.5 6 1 12 L12.8 22 L20.5 10.4 C19.3 7 18 3.5 14.6 0.5 Z" fill="url(#ggray3d)"/></svg>
<svg style="left:208px;top:178px" width="22" height="22" viewBox="0 0 22 22"><path d="M1 1 v19 h20" fill="none" stroke="#000" stroke-width="1.2"/><path d="M3 15 l5 -6 l4 6 l6 -9" fill="none" stroke="#2a5ab0" stroke-width="1.5"/><path d="M3 17 l7 -7 l4 3 l5 -5" fill="none" stroke="#8ab0e8" stroke-width="1.2"/></svg>
<div class="a" style="left:257px;top:177px;width:24px;font:bold 14px/11px 'Liberation Serif',serif;color:#4a8fd6;text-align:right;white-space:nowrap;letter-spacing:-0.3px"><span style="font-size:12px">&#x21E6;</span>.0<br>.00</div><div class="a" style="left:286px;top:177px;width:24px;font:bold 14px/11px 'Liberation Serif',serif;color:#c0c0c0;text-align:right;white-space:nowrap;letter-spacing:-0.3px">.00<br><span style="font-size:12px">&#x21E8;</span>.0</div><svg style="left:338px;top:177px" width="22" height="22" viewBox="0 0 22 22"><path d="M14.6 0 C10 1 4.5 6 1 12 L13.3 22.5 L21.5 10.4 C19.8 7 18.2 3 14.6 0 Z" fill="url(#gthreed)"/><g stroke="#0000ff" stroke-width="1.9" fill="none" stroke-linecap="square"><path d="M1 5.5 V1 H5.5 M16.5 1 H21 V5.5 M1 16.5 V21 H5.5 M16.5 21 H21 V16.5"/></g></svg>
<svg style="left:366px;top:177px" width="22" height="22" viewBox="0 0 22 22"><path d="M12 0 C8 1 4 6 1 12 L11.5 22.5 L20 10.4 C19 6 16 2 12 0 Z" fill="url(#gthreed)"/><g stroke="#0000ff" stroke-width="2.1"><path d="M1.1 1 V21 M20.9 1 V21"/></g></svg>
<svg style="left:394px;top:177px" width="22" height="22" viewBox="0 0 22 22"><path d="M14.6 0 C10 1 4.5 6 1 12 L13.3 22.5 L21.5 10.4 C19.8 7 18.2 3 14.6 0 Z" fill="url(#gthreed)"/><g stroke="#0000ff" stroke-width="1.9"><path d="M0.5 1 H20.5 M0.5 21 H20.5"/></g></svg>
<svg style="left:422px;top:177px" width="22" height="22" viewBox="0 0 22 22"><rect x="3.9" y="3.9" width="14.2" height="14.2" fill="#30f000" stroke="#000" stroke-width="1.9"/><rect x="7" y="6.8" width="8" height="8.4" fill="#ffff00"/><path d="M5 5 L17 17 M17 5 L5 17" stroke="#000" stroke-width="0.8"/><circle cx="11" cy="11" r="0.9" fill="#000"/><g stroke="#0000ff" stroke-width="1.9" fill="none" stroke-linecap="square"><path d="M1 5.5 V1 H5.5 M16.5 1 H21 V5.5 M1 16.5 V21 H5.5 M16.5 21 H21 V16.5"/></g></svg>
<svg style="left:450px;top:177px" width="22" height="22" viewBox="0 0 22 22"><rect x="3.9" y="3.9" width="14.2" height="14.2" fill="#ffff00" stroke="#000" stroke-width="1.9"/><rect x="4.8" y="4.8" width="6.4" height="12.4" fill="#10e800"/><g stroke="#0000ff" stroke-width="2.1"><path d="M1.1 1 V21 M20.9 1 V21"/></g></svg>
<svg style="left:478px;top:177px" width="22" height="22" viewBox="0 0 22 22"><rect x="3.9" y="3.9" width="14.2" height="14.2" fill="#ffff00" stroke="#000" stroke-width="1.9"/><rect x="4.8" y="4.8" width="12.4" height="6" fill="#10e800"/><g stroke="#0000ff" stroke-width="1.9"><path d="M0.5 1 H20.5 M0.5 21 H20.5"/></g></svg>
<div class="a" style="left:327.0px;top:206.0px;font:normal normal 16px/19px 'Liberation Sans',sans-serif;white-space:nowrap;letter-spacing:1.291px;text-decoration:underline;text-decoration-skip-ink:none;text-underline-offset:1.5px;">Idle Airflow - RPM (rpm)</div><div class="a" style="left:85px;top:230px;width:684px;height:161px;background:#f0f0f0"></div><div class="a" style="left:85px;top:230px;width:55px;height:17px;border:1px solid #a0a0a0;background:#f0f0f0"></div><div class="a" style="left:139px;top:230px;width:38px;height:17px;border:1px solid #a0a0a0;background:#f0f0f0"><div style="position:absolute;font-size:12px;line-height:14px;white-space:nowrap;right:4.5px;top:1px;transform:scaleX(0.9);transform-origin:100% 0">200</div></div><div class="a" style="left:176px;top:230px;width:38px;height:17px;border:1px solid #a0a0a0;background:#f0f0f0"><div style="position:absolute;font-size:12px;line-height:14px;white-space:nowrap;right:4.5px;top:1px;transform:scaleX(0.9);transform-origin:100% 0">400</div></div><div class="a" style="left:213px;top:230px;width:38px;height:17px;border:1px solid #a0a0a0;background:#f0f0f0"><div style="position:absolute;font-size:12px;line-height:14px;white-space:nowrap;right:4.5px;top:1px;transform:scaleX(0.9);transform-origin:100% 0">600</div></div><div class="a" style="left:250px;top:230px;width:38px;height:17px;border:1px solid #a0a0a0;background:#f0f0f0"><div style="position:absolute;font-size:12px;line-height:14px;white-space:nowrap;right:4.5px;top:1px;transform:scaleX(0.9);transform-origin:100% 0">800</div></div><div class="a" style="left:287px;top:230px;width:38px;height:17px;border:1px solid #a0a0a0;background:#f0f0f0"><div style="position:absolute;font-size:12px;line-height:14px;white-space:nowrap;right:4.5px;top:1px;transform:scaleX(0.9);transform-origin:100% 0">1,000</div></div><div class="a" style="left:324px;top:230px;width:38px;height:17px;border:1px solid #a0a0a0;background:#f0f0f0"><div style="position:absolute;font-size:12px;line-height:14px;white-space:nowrap;right:4.5px;top:1px;transform:scaleX(0.9);transform-origin:100% 0">1,200</div></div><div class="a" style="left:361px;top:230px;width:38px;height:17px;border:1px solid #a0a0a0;background:#f0f0f0"><div style="position:absolute;font-size:12px;line-height:14px;white-space:nowrap;right:4.5px;top:1px;transform:scaleX(0.9);transform-origin:100% 0">1,600</div></div><div class="a" style="left:398px;top:230px;width:38px;height:17px;border:1px solid #a0a0a0;background:#f0f0f0"><div style="position:absolute;font-size:12px;line-height:14px;white-space:nowrap;right:4.5px;top:1px;transform:scaleX(0.9);transform-origin:100% 0">2,000</div></div><div class="a" style="left:435px;top:230px;width:38px;height:17px;border:1px solid #a0a0a0;background:#f0f0f0"><div style="position:absolute;font-size:12px;line-height:14px;white-space:nowrap;right:4.5px;top:1px;transform:scaleX(0.9);transform-origin:100% 0">2,500</div></div><div class="a" style="left:472px;top:230px;width:38px;height:17px;border:1px solid #a0a0a0;background:#f0f0f0"><div style="position:absolute;font-size:12px;line-height:14px;white-space:nowrap;right:4.5px;top:1px;transform:scaleX(0.9);transform-origin:100% 0">3,000</div></div><div class="a" style="left:509px;top:230px;width:38px;height:17px;border:1px solid #a0a0a0;background:#f0f0f0"><div style="position:absolute;font-size:12px;line-height:14px;white-space:nowrap;right:4.5px;top:1px;transform:scaleX(0.9);transform-origin:100% 0">3,500</div></div><div class="a" style="left:546px;top:230px;width:38px;height:17px;border:1px solid #a0a0a0;background:#f0f0f0"><div style="position:absolute;font-size:12px;line-height:14px;white-space:nowrap;right:4.5px;top:1px;transform:scaleX(0.9);transform-origin:100% 0">4,000</div></div><div class="a" style="left:583px;top:230px;width:38px;height:17px;border:1px solid #a0a0a0;background:#f0f0f0"><div style="position:absolute;font-size:12px;line-height:14px;white-space:nowrap;right:4.5px;top:1px;transform:scaleX(0.9);transform-origin:100% 0">4,500</div></div><div class="a" style="left:620px;top:230px;width:38px;height:17px;border:1px solid #a0a0a0;background:#f0f0f0"><div style="position:absolute;font-size:12px;line-height:14px;white-space:nowrap;right:4.5px;top:1px;transform:scaleX(0.9);transform-origin:100% 0">5,000</div></div><div class="a" style="left:657px;top:230px;width:38px;height:17px;border:1px solid #a0a0a0;background:#f0f0f0"><div style="position:absolute;font-size:12px;line-height:14px;white-space:nowrap;right:4.5px;top:1px;transform:scaleX(0.9);transform-origin:100% 0">6,000</div></div><div class="a" style="left:694px;top:230px;width:38px;height:17px;border:1px solid #a0a0a0;background:#f0f0f0"><div style="position:absolute;font-size:12px;line-height:14px;white-space:nowrap;right:4.5px;top:1px;transform:scaleX(0.9);transform-origin:100% 0">7,000</div></div><div class="a" style="left:731px;top:230px;width:38px;height:17px;border:1px solid #a0a0a0;background:#f0f0f0"><div style="position:absolute;font-size:12px;line-height:14px;white-space:nowrap;right:4.5px;top:1px;transform:scaleX(0.9);transform-origin:100% 0">8,000</div></div><div class="a" style="left:85px;top:246px;width:55px;height:17px;border:1px solid #a0a0a0;background:#f0f0f0"><div style="position:absolute;font-size:12px;line-height:14px;white-space:nowrap;left:4.5px;top:1px;transform:scaleX(0.869);transform-origin:0 0">1st Gear</div></div><div class="a" style="left:140px;top:247px;width:36px;height:15px;background:#ffa000"><div class="a" style="left:0;top:0;width:36px;height:15px;border:1px dotted #000"></div><div style="position:absolute;font-size:12px;line-height:14px;white-space:nowrap;right:4.5px;top:1px;transform:scaleX(0.9);transform-origin:100% 0">89</div></div><div class="a" style="left:177px;top:247px;width:36px;height:15px;background:#ffd600"><div style="position:absolute;font-size:12px;line-height:14px;white-space:nowrap;right:4.5px;top:1px;transform:scaleX(0.9);transform-origin:100% 0">33</div></div><div class="a" style="left:214px;top:247px;width:36px;height:15px;background:#ffe400"><div style="position:absolute;font-size:12px;line-height:14px;white-space:nowrap;right:4.5px;top:1px;transform:scaleX(0.9);transform-origin:100% 0">18</div></div><div class="a" style="left:251px;top:247px;width:36px;height:15px;background:#ffe400"><div style="position:absolute;font-size:12px;line-height:14px;white-space:nowrap;right:4.5px;top:1px;transform:scaleX(0.9);transform-origin:100% 0">18</div></div><div class="a" style="left:288px;top:247px;width:36px;height:15px;background:#ffe400"><div style="position:absolute;font-size:12px;line-height:14px;white-space:nowrap;right:4.5px;top:1px;transform:scaleX(0.9);transform-origin:100% 0">18</div></div><div class="a" style="left:325px;top:247px;width:36px;height:15px;background:#ffef00"><div style="position:absolute;font-size:12px;line-height:14px;white-space:nowrap;right:4.5px;top:1px;transform:scaleX(0.9);transform-origin:100% 0">7</div></div><div class="a" style="left:362px;top:247px;width:36px;height:15px;background:#fffc00"><div style="position:absolute;font-size:12px;line-height:14px;white-space:nowrap;right:4.5px;top:1px;transform:scaleX(0.9);transform-origin:100% 0">-7</div></div><div class="a" style="left:399px;top:247px;width:36px;height:15px;background:#ecff00"><div style="position:absolute;font-size:12px;line-height:14px;white-space:nowrap;right:4.5px;top:1px;transform:scaleX(0.9);transform-origin:100% 0">-16</div></div><div class="a" style="left:436px;top:247px;width:36px;height:15px;background:#ecff00"><div style="position:absolute;font-size:12px;line-height:14px;white-space:nowrap;right:4.5px;top:1px;transform:scaleX(0.9);transform-origin:100% 0">-16</div></div><div class="a" style="left:473px;top:247px;width:36px;height:15px;background:#e5ff00"><div style="position:absolute;font-size:12px;line-height:14px;white-space:nowrap;right:4.5px;top:1px;transform:scaleX(0.9);transform-origin:100% 0">-18</div></div><div class="a" style="left:510px;top:247px;width:36px;height:15px;background:#dbff00"><div style="position:absolute;font-size:12px;line-height:14px;white-space:nowrap;right:4.5px;top:1px;transform:scaleX(0.9);transform-origin:100% 0">-21</div></div><div class="a" style="left:547px;top:247px;width:36px;height:15px;background:#d8ff00"><div style="position:absolute;font-size:12px;line-height:14px;white-space:nowrap;right:4.5px;top:1px;transform:scaleX(0.9);transform-origin:100% 0">-22</div></div><div class="a" style="left:584px;top:247px;width:36px;height:15px;background:#d8ff00"><div style="position:absolute;font-size:12px;line-height:14px;white-space:nowrap;right:4.5px;top:1px;transform:scaleX(0.9);transform-origin:100% 0">-22</div></div><div class="a" style="left:621px;top:247px;width:36px;height:15px;background:#d8ff00"><div style="position:absolute;font-size:12px;line-height:14px;white-space:nowrap;right:4.5px;top:1px;transform:scaleX(0.9);transform-origin:100% 0">-22</div></div><div class="a" style="left:658px;top:247px;width:36px;height:15px;background:#d8ff00"><div style="position:absolute;font-size:12px;line-height:14px;white-space:nowrap;right:4.5px;top:1px;transform:scaleX(0.9);transform-origin:100% 0">-22</div></div><div class="a" style="left:695px;top:247px;width:36px;height:15px;background:#d8ff00"><div style="position:absolute;font-size:12px;line-height:14px;white-space:nowrap;right:4.5px;top:1px;transform:scaleX(0.9);transform-origin:100% 0">-22</div></div><div class="a" style="left:732px;top:247px;width:36px;height:15px;background:#d8ff00"><div style="position:absolute;font-size:12px;line-height:14px;white-space:nowrap;right:4.5px;top:1px;transform:scaleX(0.9);transform-origin:100% 0">-22</div></div><div class="a" style="left:85px;top:262px;width:55px;height:17px;border:1px solid #a0a0a0;background:#f0f0f0"><div style="position:absolute;font-size:12px;line-height:14px;white-space:nowrap;left:4.5px;top:1px;transform:scaleX(0.885);transform-origin:0 0">2nd Gear</div></div><div class="a" style="left:140px;top:263px;width:36px;height:15px;background:#ffa000"><div style="position:absolute;font-size:12px;line-height:14px;white-space:nowrap;right:4.5px;top:1px;transform:scaleX(0.9);transform-origin:100% 0">89</div></div><div class="a" style="left:177px;top:263px;width:36px;height:15px;background:#ffd600"><div style="position:absolute;font-size:12px;line-height:14px;white-space:nowrap;right:4.5px;top:1px;transform:scaleX(0.9);transform-origin:100% 0">33</div></div><div class="a" style="left:214px;top:263px;width:36px;height:15px;background:#ffe400"><div style="position:absolute;font-size:12px;line-height:14px;white-space:nowrap;right:4.5px;top:1px;transform:scaleX(0.9);transform-origin:100% 0">18</div></div><div class="a" style="left:251px;top:263px;width:36px;height:15px;background:#ffe600"><div style="position:absolute;font-size:12px;line-height:14px;white-space:nowrap;right:4.5px;top:1px;transform:scaleX(0.9);transform-origin:100% 0">16</div></div><div class="a" style="left:288px;top:263px;width:36px;height:15px;background:#ffee00"><div style="position:absolute;font-size:12px;line-height:14px;white-space:nowrap;right:4.5px;top:1px;transform:scaleX(0.9);transform-origin:100% 0">8</div></div><div class="a" style="left:325px;top:263px;width:36px;height:15px;background:#fffc00"><div style="position:absolute;font-size:12px;line-height:14px;white-space:nowrap;right:4.5px;top:1px;transform:scaleX(0.9);transform-origin:100% 0">-7</div></div><div class="a" style="left:362px;top:263px;width:36px;height:15px;background:#ffff00"><div style="position:absolute;font-size:12px;line-height:14px;white-space:nowrap;right:4.5px;top:1px;transform:scaleX(0.9);transform-origin:100% 0">-10</div></div><div class="a" style="left:399px;top:263px;width:36px;height:15px;background:#ecff00"><div style="position:absolute;font-size:12px;line-height:14px;white-space:nowrap;right:4.5px;top:1px;transform:scaleX(0.9);transform-origin:100% 0">-16</div></div><div class="a" style="left:436px;top:263px;width:36px;height:15px;background:#ecff00"><div style="position:absolute;font-size:12px;line-height:14px;white-space:nowrap;right:4.5px;top:1px;transform:scaleX(0.9);transform-origin:100% 0">-16</div></div><div class="a" style="left:473px;top:263px;width:36px;height:15px;background:#e5ff00"><div style="position:absolute;font-size:12px;line-height:14px;white-space:nowrap;right:4.5px;top:1px;transform:scaleX(0.9);transform-origin:100% 0">-18</div></div><div class="a" style="left:510px;top:263px;width:36px;height:15px;background:#dbff00"><div style="position:absolute;font-size:12px;line-height:14px;white-space:nowrap;right:4.5px;top:1px;transform:scaleX(0.9);transform-origin:100% 0">-21</div></div><div class="a" style="left:547px;top:263px;width:36px;height:15px;background:#d8ff00"><div style="position:absolute;font-size:12px;line-height:14px;white-space:nowrap;right:4.5px;top:1px;transform:scaleX(0.9);transform-origin:100% 0">-22</div></div><div class="a" style="left:584px;top:263px;width:36px;height:15px;background:#d8ff00"><div style="position:absolute;font-size:12px;line-height:14px;white-space:nowrap;right:4.5px;top:1px;transform:scaleX(0.9);transform-origin:100% 0">-22</div></div><div class="a" style="left:621px;top:263px;width:36px;height:15px;background:#d8ff00"><div style="position:absolute;font-size:12px;line-height:14px;white-space:nowrap;right:4.5px;top:1px;transform:scaleX(0.9);transform-origin:100% 0">-22</div></div><div class="a" style="left:658px;top:263px;width:36px;height:15px;background:#d8ff00"><div style="position:absolute;font-size:12px;line-height:14px;white-space:nowrap;right:4.5px;top:1px;transform:scaleX(0.9);transform-origin:100% 0">-22</div></div><div class="a" style="left:695px;top:263px;width:36px;height:15px;background:#d8ff00"><div style="position:absolute;font-size:12px;line-height:14px;white-space:nowrap;right:4.5px;top:1px;transform:scaleX(0.9);transform-origin:100% 0">-22</div></div><div class="a" style="left:732px;top:263px;width:36px;height:15px;background:#d8ff00"><div style="position:absolute;font-size:12px;line-height:14px;white-space:nowrap;right:4.5px;top:1px;transform:scaleX(0.9);transform-origin:100% 0">-22</div></div><div class="a" style="left:85px;top:278px;width:55px;height:17px;border:1px solid #a0a0a0;background:#f0f0f0"><div style="position:absolute;font-size:12px;line-height:14px;white-space:nowrap;left:4.5px;top:1px;transform:scaleX(0.893);transform-origin:0 0">3rd Gear</div></div><div class="a" style="left:140px;top:279px;width:36px;height:15px;background:#ffa000"><div style="position:absolute;font-size:12px;line-height:14px;white-space:nowrap;right:4.5px;top:1px;transform:scaleX(0.9);transform-origin:100% 0">89</div></div><div class="a" style="left:177px;top:279px;width:36px;height:15px;background:#ffd600"><div style="position:absolute;font-size:12px;line-height:14px;white-space:nowrap;right:4.5px;top:1px;transform:scaleX(0.9);transform-origin:100% 0">33</div></div><div class="a" style="left:214px;top:279px;width:36px;height:15px;background:#ffe400"><div style="position:absolute;font-size:12px;line-height:14px;white-space:nowrap;right:4.5px;top:1px;transform:scaleX(0.9);transform-origin:100% 0">18</div></div><div class="a" style="left:251px;top:279px;width:36px;height:15px;background:#ffe600"><div style="position:absolute;font-size:12px;line-height:14px;white-space:nowrap;right:4.5px;top:1px;transform:scaleX(0.9);transform-origin:100% 0">16</div></div><div class="a" style="left:288px;top:279px;width:36px;height:15px;background:#ffee00"><div style="position:absolute;font-size:12px;line-height:14px;white-space:nowrap;right:4.5px;top:1px;transform:scaleX(0.9);transform-origin:100% 0">8</div></div><div class="a" style="left:325px;top:279px;width:36px;height:15px;background:#fffc00"><div style="position:absolute;font-size:12px;line-height:14px;white-space:nowrap;right:4.5px;top:1px;transform:scaleX(0.9);transform-origin:100% 0">-7</div></div><div class="a" style="left:362px;top:279px;width:36px;height:15px;background:#ffff00"><div style="position:absolute;font-size:12px;line-height:14px;white-space:nowrap;right:4.5px;top:1px;transform:scaleX(0.9);transform-origin:100% 0">-10</div></div><div class="a" style="left:399px;top:279px;width:36px;height:15px;background:#ecff00"><div style="position:absolute;font-size:12px;line-height:14px;white-space:nowrap;right:4.5px;top:1px;transform:scaleX(0.9);transform-origin:100% 0">-16</div></div><div class="a" style="left:436px;top:279px;width:36px;height:15px;background:#ecff00"><div style="position:absolute;font-size:12px;line-height:14px;white-space:nowrap;right:4.5px;top:1px;transform:scaleX(0.9);transform-origin:100% 0">-16</div></div><div class="a" style="left:473px;top:279px;width:36px;height:15px;background:#e5ff00"><div style="position:absolute;font-size:12px;line-height:14px;white-space:nowrap;right:4.5px;top:1px;transform:scaleX(0.9);transform-origin:100% 0">-18</div></div><div class="a" style="left:510px;top:279px;width:36px;height:15px;background:#dbff00"><div style="position:absolute;font-size:12px;line-height:14px;white-space:nowrap;right:4.5px;top:1px;transform:scaleX(0.9);transform-origin:100% 0">-21</div></div><div class="a" style="left:547px;top:279px;width:36px;height:15px;background:#d8ff00"><div style="position:absolute;font-size:12px;line-height:14px;white-space:nowrap;right:4.5px;top:1px;transform:scaleX(0.9);transform-origin:100% 0">-22</div></div><div class="a" style="left:584px;top:279px;width:36px;height:15px;background:#d8ff00"><div style="position:absolute;font-size:12px;line-height:14px;white-space:nowrap;right:4.5px;top:1px;transform:scaleX(0.9);transform-origin:100% 0">-22</div></div><div class="a" style="left:621px;top:279px;width:36px;height:15px;background:#d8ff00"><div style="position:absolute;font-size:12px;line-height:14px;white-space:nowrap;right:4.5px;top:1px;transform:scaleX(0.9);transform-origin:100% 0">-22</div></div><div class="a" style="left:658px;top:279px;width:36px;height:15px;background:#d8ff00"><div style="position:absolute;font-size:12px;line-height:14px;white-space:nowrap;right:4.5px;top:1px;transform:scaleX(0.9);transform-origin:100% 0">-22</div></div><div class="a" style="left:695px;top:279px;width:36px;height:15px;background:#d8ff00"><div style="position:absolute;font-size:12px;line-height:14px;white-space:nowrap;right:4.5px;top:1px;transform:scaleX(0.9);transform-origin:100% 0">-22</div></div><div class="a" style="left:732px;top:279px;width:36px;height:15px;background:#d8ff00"><div style="position:absolute;font-size:12px;line-height:14px;white-space:nowrap;right:4.5px;top:1px;transform:scaleX(0.9);transform-origin:100% 0">-22</div></div><div class="a" style="left:85px;top:294px;width:55px;height:17px;border:1px solid #a0a0a0;background:#f0f0f0"><div style="position:absolute;font-size:12px;line-height:14px;white-space:nowrap;left:4.5px;top:1px;transform:scaleX(0.906);transform-origin:0 0">4th Gear</div></div><div class="a" style="left:140px;top:295px;width:36px;height:15px;background:#ffa000"><div style="position:absolute;font-size:12px;line-height:14px;white-space:nowrap;right:4.5px;top:1px;transform:scaleX(0.9);transform-origin:100% 0">89</div></div><div class="a" style="left:177px;top:295px;width:36px;height:15px;background:#ffd600"><div style="position:absolute;font-size:12px;line-height:14px;white-space:nowrap;right:4.5px;top:1px;transform:scaleX(0.9);transform-origin:100% 0">33</div></div><div class="a" style="left:214px;top:295px;width:36px;height:15px;background:#ffe400"><div style="position:absolute;font-size:12px;line-height:14px;white-space:nowrap;right:4.5px;top:1px;transform:scaleX(0.9);transform-origin:100% 0">18</div></div><div class="a" style="left:251px;top:295px;width:36px;height:15px;background:#ffe600"><div style="position:absolute;font-size:12px;line-height:14px;white-space:nowrap;right:4.5px;top:1px;transform:scaleX(0.9);transform-origin:100% 0">16</div></div><div class="a" style="left:288px;top:295px;width:36px;height:15px;background:#ffee00"><div style="position:absolute;font-size:12px;line-height:14px;white-space:nowrap;right:4.5px;top:1px;transform:scaleX(0.9);transform-origin:100% 0">8</div></div><div class="a" style="left:325px;top:295px;width:36px;height:15px;background:#fffc00"><div style="position:absolute;font-size:12px;line-height:14px;white-space:nowrap;right:4.5px;top:1px;transform:scaleX(0.9);transform-origin:100% 0">-7</div></div><div class="a" style="left:362px;top:295px;width:36px;height:15px;background:#f5ff00"><div style="position:absolute;font-size:12px;line-height:14px;white-space:nowrap;right:4.5px;top:1px;transform:scaleX(0.9);transform-origin:100% 0">-13</div></div><div class="a" style="left:399px;top:295px;width:36px;height:15px;background:#e5ff00"><div style="position:absolute;font-size:12px;line-height:14px;white-space:nowrap;right:4.5px;top:1px;transform:scaleX(0.9);transform-origin:100% 0">-18</div></div><div class="a" style="left:436px;top:295px;width:36px;height:15px;background:#e2ff00"><div style="position:absolute;font-size:12px;line-height:14px;white-space:nowrap;right:4.5px;top:1px;transform:scaleX(0.9);transform-origin:100% 0">-19</div></div><div class="a" style="left:473px;top:295px;width:36px;height:15px;background:#dbff00"><div style="position:absolute;font-size:12px;line-height:14px;white-space:nowrap;right:4.5px;top:1px;transform:scaleX(0.9);transform-origin:100% 0">-21</div></div><div class="a" style="left:510px;top:295px;width:36px;height:15px;background:#d2ff00"><div style="position:absolute;font-size:12px;line-height:14px;white-space:nowrap;right:4.5px;top:1px;transform:scaleX(0.9);transform-origin:100% 0">-24</div></div><div class="a" style="left:547px;top:295px;width:36px;height:15px;background:#d2ff00"><div style="position:absolute;font-size:12px;line-height:14px;white-space:nowrap;right:4.5px;top:1px;transform:scaleX(0.9);transform-origin:100% 0">-24</div></div><div class="a" style="left:584px;top:295px;width:36px;height:15px;background:#d2ff00"><div style="position:absolute;font-size:12px;line-height:14px;white-space:nowrap;right:4.5px;top:1px;transform:scaleX(0.9);transform-origin:100% 0">-24</div></div><div class="a" style="left:621px;top:295px;width:36px;height:15px;background:#d2ff00"><div style="position:absolute;font-size:12px;line-height:14px;white-space:nowrap;right:4.5px;top:1px;transform:scaleX(0.9);transform-origin:100% 0">-24</div></div><div class="a" style="left:658px;top:295px;width:36px;height:15px;background:#d2ff00"><div style="position:absolute;font-size:12px;line-height:14px;white-space:nowrap;right:4.5px;top:1px;transform:scaleX(0.9);transform-origin:100% 0">-24</div></div><div class="a" style="left:695px;top:295px;width:36px;height:15px;background:#d2ff00"><div style="position:absolute;font-size:12px;line-height:14px;white-space:nowrap;right:4.5px;top:1px;transform:scaleX(0.9);transform-origin:100% 0">-24</div></div><div class="a" style="left:732px;top:295px;width:36px;height:15px;background:#d2ff00"><div style="position:absolute;font-size:12px;line-height:14px;white-space:nowrap;right:4.5px;top:1px;transform:scaleX(0.9);transform-origin:100% 0">-24</div></div><div class="a" style="left:85px;top:310px;width:55px;height:17px;border:1px solid #a0a0a0;background:#f0f0f0"><div style="position:absolute;font-size:12px;line-height:14px;white-space:nowrap;left:4.5px;top:1px;transform:scaleX(0.906);transform-origin:0 0">5th Gear</div></div><div class="a" style="left:140px;top:311px;width:36px;height:15px;background:#ffa000"><div style="position:absolute;font-size:12px;line-height:14px;white-space:nowrap;right:4.5px;top:1px;transform:scaleX(0.9);transform-origin:100% 0">89</div></div><div class="a" style="left:177px;top:311px;width:36px;height:15px;background:#ffd600"><div style="position:absolute;font-size:12px;line-height:14px;white-space:nowrap;right:4.5px;top:1px;transform:scaleX(0.9);transform-origin:100% 0">33</div></div><div class="a" style="left:214px;top:311px;width:36px;height:15px;background:#ffe400"><div style="position:absolute;font-size:12px;line-height:14px;white-space:nowrap;right:4.5px;top:1px;transform:scaleX(0.9);transform-origin:100% 0">18</div></div><div class="a" style="left:251px;top:311px;width:36px;height:15px;background:#ffe600"><div style="position:absolute;font-size:12px;line-height:14px;white-space:nowrap;right:4.5px;top:1px;transform:scaleX(0.9);transform-origin:100% 0">16</div></div><div class="a" style="left:288px;top:311px;width:36px;height:15px;background:#ffee00"><div style="position:absolute;font-size:12px;line-height:14px;white-space:nowrap;right:4.5px;top:1px;transform:scaleX(0.9);transform-origin:100% 0">8</div></div><div class="a" style="left:325px;top:311px;width:36px;height:15px;background:#fffc00"><div style="position:absolute;font-size:12px;line-height:14px;white-space:nowrap;right:4.5px;top:1px;transform:scaleX(0.9);transform-origin:100% 0">-7</div></div><div class="a" style="left:362px;top:311px;width:36px;height:15px;background:#efff00"><div style="position:absolute;font-size:12px;line-height:14px;white-space:nowrap;right:4.5px;top:1px;transform:scaleX(0.9);transform-origin:100% 0">-15</div></div><div class="a" style="left:399px;top:311px;width:36px;height:15px;background:#dfff00"><div style="position:absolute;font-size:12px;line-height:14px;white-space:nowrap;right:4.5px;top:1px;transform:scaleX(0.9);transform-origin:100% 0">-20</div></div><div class="a" style="left:436px;top:311px;width:36px;height:15px;background:#d8ff00"><div style="position:absolute;font-size:12px;line-height:14px;white-space:nowrap;right:4.5px;top:1px;transform:scaleX(0.9);transform-origin:100% 0">-22</div></div><div class="a" style="left:473px;top:311px;width:36px;height:15px;background:#d2ff00"><div style="position:absolute;font-size:12px;line-height:14px;white-space:nowrap;right:4.5px;top:1px;transform:scaleX(0.9);transform-origin:100% 0">-24</div></div><div class="a" style="left:510px;top:311px;width:36px;height:15px;background:#cfff00"><div style="position:absolute;font-size:12px;line-height:14px;white-space:nowrap;right:4.5px;top:1px;transform:scaleX(0.9);transform-origin:100% 0">-25</div></div><div class="a" style="left:547px;top:311px;width:36px;height:15px;background:#cfff00"><div style="position:absolute;font-size:12px;line-height:14px;white-space:nowrap;right:4.5px;top:1px;transform:scaleX(0.9);transform-origin:100% 0">-25</div></div><div class="a" style="left:584px;top:311px;width:36px;height:15px;background:#cfff00"><div style="position:absolute;font-size:12px;line-height:14px;white-space:nowrap;right:4.5px;top:1px;transform:scaleX(0.9);transform-origin:100% 0">-25</div></div><div class="a" style="left:621px;top:311px;width:36px;height:15px;background:#cfff00"><div style="position:absolute;font-size:12px;line-height:14px;white-space:nowrap;right:4.5px;top:1px;transform:scaleX(0.9);transform-origin:100% 0">-25</div></div><div class="a" style="left:658px;top:311px;width:36px;height:15px;background:#cfff00"><div style="position:absolute;font-size:12px;line-height:14px;white-space:nowrap;right:4.5px;top:1px;transform:scaleX(0.9);transform-origin:100% 0">-25</div></div><div class="a" style="left:695px;top:311px;width:36px;height:15px;background:#cfff00"><div style="position:absolute;font-size:12px;line-height:14px;white-space:nowrap;right:4.5px;top:1px;transform:scaleX(0.9);transform-origin:100% 0">-25</div></div><div class="a" style="left:732px;top:311px;width:36px;height:15px;background:#cfff00"><div style="position:absolute;font-size:12px;line-height:14px;white-space:nowrap;right:4.5px;top:1px;transform:scaleX(0.9);transform-origin:100% 0">-25</div></div><div class="a" style="left:85px;top:326px;width:55px;height:17px;border:1px solid #a0a0a0;background:#f0f0f0"><div style="position:absolute;font-size:12px;line-height:14px;white-space:nowrap;left:4.5px;top:1px;transform:scaleX(0.906);transform-origin:0 0">6th Gear</div></div><div class="a" style="left:140px;top:327px;width:36px;height:15px;background:#ffa000"><div style="position:absolute;font-size:12px;line-height:14px;white-space:nowrap;right:4.5px;top:1px;transform:scaleX(0.9);transform-origin:100% 0">89</div></div><div class="a" style="left:177px;top:327px;width:36px;height:15px;background:#ffd600"><div style="position:absolute;font-size:12px;line-height:14px;white-space:nowrap;right:4.5px;top:1px;transform:scaleX(0.9);transform-origin:100% 0">33</div></div><div class="a" style="left:214px;top:327px;width:36px;height:15px;background:#ffe400"><div style="position:absolute;font-size:12px;line-height:14px;white-space:nowrap;right:4.5px;top:1px;transform:scaleX(0.9);transform-origin:100% 0">18</div></div><div class="a" style="left:251px;top:327px;width:36px;height:15px;background:#ffe600"><div style="position:absolute;font-size:12px;line-height:14px;white-space:nowrap;right:4.5px;top:1px;transform:scaleX(0.9);transform-origin:100% 0">16</div></div><div class="a" style="left:288px;top:327px;width:36px;height:15px;background:#ffee00"><div style="position:absolute;font-size:12px;line-height:14px;white-space:nowrap;right:4.5px;top:1px;transform:scaleX(0.9);transform-origin:100% 0">8</div></div><div class="a" style="left:325px;top:327px;width:36px;height:15px;background:#fffc00"><div style="position:absolute;font-size:12px;line-height:14px;white-space:nowrap;right:4.5px;top:1px;transform:scaleX(0.9);transform-origin:100% 0">-7</div></div><div class="a" style="left:362px;top:327px;width:36px;height:15px;background:#efff00"><div style="position:absolute;font-size:12px;line-height:14px;white-space:nowrap;right:4.5px;top:1px;transform:scaleX(0.9);transform-origin:100% 0">-15</div></div><div class="a" style="left:399px;top:327px;width:36px;height:15px;background:#dfff00"><div style="position:absolute;font-size:12px;line-height:14px;white-space:nowrap;right:4.5px;top:1px;transform:scaleX(0.9);transform-origin:100% 0">-20</div></div><div class="a" style="left:436px;top:327px;width:36px;height:15px;background:#d8ff00"><div style="position:absolute;font-size:12px;line-height:14px;white-space:nowrap;right:4.5px;top:1px;transform:scaleX(0.9);transform-origin:100% 0">-22</div></div><div class="a" style="left:473px;top:327px;width:36px;height:15px;background:#d2ff00"><div style="position:absolute;font-size:12px;line-height:14px;white-space:nowrap;right:4.5px;top:1px;transform:scaleX(0.9);transform-origin:100% 0">-24</div></div><div class="a" style="left:510px;top:327px;width:36px;height:15px;background:#cfff00"><div style="position:absolute;font-size:12px;line-height:14px;white-space:nowrap;right:4.5px;top:1px;transform:scaleX(0.9);transform-origin:100% 0">-25</div></div><div class="a" style="left:547px;top:327px;width:36px;height:15px;background:#cfff00"><div style="position:absolute;font-size:12px;line-height:14px;white-space:nowrap;right:4.5px;top:1px;transform:scaleX(0.9);transform-origin:100% 0">-25</div></div><div class="a" style="left:584px;top:327px;width:36px;height:15px;background:#cfff00"><div style="position:absolute;font-size:12px;line-height:14px;white-space:nowrap;right:4.5px;top:1px;transform:scaleX(0.9);transform-origin:100% 0">-25</div></div><div class="a" style="left:621px;top:327px;width:36px;height:15px;background:#cfff00"><div style="position:absolute;font-size:12px;line-height:14px;white-space:nowrap;right:4.5px;top:1px;transform:scaleX(0.9);transform-origin:100% 0">-25</div></div><div class="a" style="left:658px;top:327px;width:36px;height:15px;background:#cfff00"><div style="position:absolute;font-size:12px;line-height:14px;white-space:nowrap;right:4.5px;top:1px;transform:scaleX(0.9);transform-origin:100% 0">-25</div></div><div class="a" style="left:695px;top:327px;width:36px;height:15px;background:#cfff00"><div style="position:absolute;font-size:12px;line-height:14px;white-space:nowrap;right:4.5px;top:1px;transform:scaleX(0.9);transform-origin:100% 0">-25</div></div><div class="a" style="left:732px;top:327px;width:36px;height:15px;background:#cfff00"><div style="position:absolute;font-size:12px;line-height:14px;white-space:nowrap;right:4.5px;top:1px;transform:scaleX(0.9);transform-origin:100% 0">-25</div></div><div class="a" style="left:85px;top:342px;width:55px;height:17px;border:1px solid #a0a0a0;background:#f0f0f0"><div style="position:absolute;font-size:12px;line-height:14px;white-space:nowrap;left:4.5px;top:1px;transform:scaleX(0.925);transform-origin:0 0">Neutral</div></div><div class="a" style="left:140px;top:343px;width:36px;height:15px;background:#ffae00"><div style="position:absolute;font-size:12px;line-height:14px;white-space:nowrap;right:4.5px;top:1px;transform:scaleX(0.9);transform-origin:100% 0">74</div></div><div class="a" style="left:177px;top:343px;width:36px;height:15px;background:#ffd600"><div style="position:absolute;font-size:12px;line-height:14px;white-space:nowrap;right:4.5px;top:1px;transform:scaleX(0.9);transform-origin:100% 0">33</div></div><div class="a" style="left:214px;top:343px;width:36px;height:15px;background:#ffef00"><div style="position:absolute;font-size:12px;line-height:14px;white-space:nowrap;right:4.5px;top:1px;transform:scaleX(0.9);transform-origin:100% 0">7</div></div><div class="a" style="left:251px;top:343px;width:36px;height:15px;background:#fff500"><div style="position:absolute;font-size:12px;line-height:14px;white-space:nowrap;right:4.5px;top:1px;transform:scaleX(0.9);transform-origin:100% 0">0</div></div><div class="a" style="left:288px;top:343px;width:36px;height:15px;background:#fffc00"><div style="position:absolute;font-size:12px;line-height:14px;white-space:nowrap;right:4.5px;top:1px;transform:scaleX(0.9);transform-origin:100% 0">-7</div></div><div class="a" style="left:325px;top:343px;width:36px;height:15px;background:#e5ff00"><div style="position:absolute;font-size:12px;line-height:14px;white-space:nowrap;right:4.5px;top:1px;transform:scaleX(0.9);transform-origin:100% 0">-18</div></div><div class="a" style="left:362px;top:343px;width:36px;height:15px;background:#beff00"><div style="position:absolute;font-size:12px;line-height:14px;white-space:nowrap;right:4.5px;top:1px;transform:scaleX(0.9);transform-origin:100% 0">-30</div></div><div class="a" style="left:399px;top:343px;width:36px;height:15px;background:#8bff00"><div style="position:absolute;font-size:12px;line-height:14px;white-space:nowrap;right:4.5px;top:1px;transform:scaleX(0.9);transform-origin:100% 0">-46</div></div><div class="a" style="left:436px;top:343px;width:36px;height:15px;background:#8bff00"><div style="position:absolute;font-size:12px;line-height:14px;white-space:nowrap;right:4.5px;top:1px;transform:scaleX(0.9);transform-origin:100% 0">-46</div></div><div class="a" style="left:473px;top:343px;width:36px;height:15px;background:#84ff00"><div style="position:absolute;font-size:12px;line-height:14px;white-space:nowrap;right:4.5px;top:1px;transform:scaleX(0.9);transform-origin:100% 0">-48</div></div><div class="a" style="left:510px;top:343px;width:36px;height:15px;background:#4aff00"><div style="position:absolute;font-size:12px;line-height:14px;white-space:nowrap;right:4.5px;top:1px;transform:scaleX(0.9);transform-origin:100% 0">-66</div></div><div class="a" style="left:547px;top:343px;width:36px;height:15px;background:#4aff00"><div style="position:absolute;font-size:12px;line-height:14px;white-space:nowrap;right:4.5px;top:1px;transform:scaleX(0.9);transform-origin:100% 0">-66</div></div><div class="a" style="left:584px;top:343px;width:36px;height:15px;background:#3dff00"><div style="position:absolute;font-size:12px;line-height:14px;white-space:nowrap;right:4.5px;top:1px;transform:scaleX(0.9);transform-origin:100% 0">-70</div></div><div class="a" style="left:621px;top:343px;width:36px;height:15px;background:#27ff00"><div style="position:absolute;font-size:12px;line-height:14px;white-space:nowrap;right:4.5px;top:1px;transform:scaleX(0.9);transform-origin:100% 0">-77</div></div><div class="a" style="left:658px;top:343px;width:36px;height:15px;background:#0dff00"><div style="position:absolute;font-size:12px;line-height:14px;white-space:nowrap;right:4.5px;top:1px;transform:scaleX(0.9);transform-origin:100% 0">-85</div></div><div class="a" style="left:695px;top:343px;width:36px;height:15px;background:#00ff00"><div style="position:absolute;font-size:12px;line-height:14px;white-space:nowrap;right:4.5px;top:1px;transform:scaleX(0.9);transform-origin:100% 0">-89</div></div><div class="a" style="left:732px;top:343px;width:36px;height:15px;background:#00ff00"><div style="position:absolute;font-size:12px;line-height:14px;white-space:nowrap;right:4.5px;top:1px;transform:scaleX(0.9);transform-origin:100% 0">-89</div></div><div class="a" style="left:85px;top:358px;width:55px;height:17px;border:1px solid #a0a0a0;background:#f0f0f0"><div style="position:absolute;font-size:12px;line-height:14px;white-space:nowrap;left:4.5px;top:1px;transform:scaleX(0.964);transform-origin:0 0">Park</div></div><div class="a" style="left:140px;top:359px;width:36px;height:15px;background:#ffa000"><div style="position:absolute;font-size:12px;line-height:14px;white-space:nowrap;right:4.5px;top:1px;transform:scaleX(0.9);transform-origin:100% 0">89</div></div><div class="a" style="left:177px;top:359px;width:36px;height:15px;background:#ffd600"><div style="position:absolute;font-size:12px;line-height:14px;white-space:nowrap;right:4.5px;top:1px;transform:scaleX(0.9);transform-origin:100% 0">33</div></div><div class="a" style="left:214px;top:359px;width:36px;height:15px;background:#ffe400"><div style="position:absolute;font-size:12px;line-height:14px;white-space:nowrap;right:4.5px;top:1px;transform:scaleX(0.9);transform-origin:100% 0">18</div></div><div class="a" style="left:251px;top:359px;width:36px;height:15px;background:#ffe400"><div style="position:absolute;font-size:12px;line-height:14px;white-space:nowrap;right:4.5px;top:1px;transform:scaleX(0.9);transform-origin:100% 0">18</div></div><div class="a" style="left:288px;top:359px;width:36px;height:15px;background:#ffe400"><div style="position:absolute;font-size:12px;line-height:14px;white-space:nowrap;right:4.5px;top:1px;transform:scaleX(0.9);transform-origin:100% 0">18</div></div><div class="a" style="left:325px;top:359px;width:36px;height:15px;background:#ffef00"><div style="position:absolute;font-size:12px;line-height:14px;white-space:nowrap;right:4.5px;top:1px;transform:scaleX(0.9);transform-origin:100% 0">7</div></div><div class="a" style="left:362px;top:359px;width:36px;height:15px;background:#fffc00"><div style="position:absolute;font-size:12px;line-height:14px;white-space:nowrap;right:4.5px;top:1px;transform:scaleX(0.9);transform-origin:100% 0">-7</div></div><div class="a" style="left:399px;top:359px;width:36px;height:15px;background:#ecff00"><div style="position:absolute;font-size:12px;line-height:14px;white-space:nowrap;right:4.5px;top:1px;transform:scaleX(0.9);transform-origin:100% 0">-16</div></div><div class="a" style="left:436px;top:359px;width:36px;height:15px;background:#ecff00"><div style="position:absolute;font-size:12px;line-height:14px;white-space:nowrap;right:4.5px;top:1px;transform:scaleX(0.9);transform-origin:100% 0">-16</div></div><div class="a" style="left:473px;top:359px;width:36px;height:15px;background:#e5ff00"><div style="position:absolute;font-size:12px;line-height:14px;white-space:nowrap;right:4.5px;top:1px;transform:scaleX(0.9);transform-origin:100% 0">-18</div></div><div class="a" style="left:510px;top:359px;width:36px;height:15px;background:#dbff00"><div style="position:absolute;font-size:12px;line-height:14px;white-space:nowrap;right:4.5px;top:1px;transform:scaleX(0.9);transform-origin:100% 0">-21</div></div><div class="a" style="left:547px;top:359px;width:36px;height:15px;background:#d8ff00"><div style="position:absolute;font-size:12px;line-height:14px;white-space:nowrap;right:4.5px;top:1px;transform:scaleX(0.9);transform-origin:100% 0">-22</div></div><div class="a" style="left:584px;top:359px;width:36px;height:15px;background:#d8ff00"><div style="position:absolute;font-size:12px;line-height:14px;white-space:nowrap;right:4.5px;top:1px;transform:scaleX(0.9);transform-origin:100% 0">-22</div></div><div class="a" style="left:621px;top:359px;width:36px;height:15px;background:#d8ff00"><div style="position:absolute;font-size:12px;line-height:14px;white-space:nowrap;right:4.5px;top:1px;transform:scaleX(0.9);transform-origin:100% 0">-22</div></div><div class="a" style="left:658px;top:359px;width:36px;height:15px;background:#d8ff00"><div style="position:absolute;font-size:12px;line-height:14px;white-space:nowrap;right:4.5px;top:1px;transform:scaleX(0.9);transform-origin:100% 0">-22</div></div><div class="a" style="left:695px;top:359px;width:36px;height:15px;background:#d8ff00"><div style="position:absolute;font-size:12px;line-height:14px;white-space:nowrap;right:4.5px;top:1px;transform:scaleX(0.9);transform-origin:100% 0">-22</div></div><div class="a" style="left:732px;top:359px;width:36px;height:15px;background:#d8ff00"><div style="position:absolute;font-size:12px;line-height:14px;white-space:nowrap;right:4.5px;top:1px;transform:scaleX(0.9);transform-origin:100% 0">-22</div></div><div class="a" style="left:85px;top:374px;width:55px;height:17px;border:1px solid #a0a0a0;background:#f0f0f0"><div style="position:absolute;font-size:12px;line-height:14px;white-space:nowrap;left:4.5px;top:1px;transform:scaleX(0.868);transform-origin:0 0">Reverse</div></div><div class="a" style="left:140px;top:375px;width:36px;height:15px;background:#ffae00"><div style="position:absolute;font-size:12px;line-height:14px;white-space:nowrap;right:4.5px;top:1px;transform:scaleX(0.9);transform-origin:100% 0">74</div></div><div class="a" style="left:177px;top:375px;width:36px;height:15px;background:#ffd600"><div style="position:absolute;font-size:12px;line-height:14px;white-space:nowrap;right:4.5px;top:1px;transform:scaleX(0.9);transform-origin:100% 0">33</div></div><div class="a" style="left:214px;top:375px;width:36px;height:15px;background:#ffef00"><div style="position:absolute;font-size:12px;line-height:14px;white-space:nowrap;right:4.5px;top:1px;transform:scaleX(0.9);transform-origin:100% 0">7</div></div><div class="a" style="left:251px;top:375px;width:36px;height:15px;background:#fff500"><div style="position:absolute;font-size:12px;line-height:14px;white-space:nowrap;right:4.5px;top:1px;transform:scaleX(0.9);transform-origin:100% 0">0</div></div><div class="a" style="left:288px;top:375px;width:36px;height:15px;background:#fffc00"><div style="position:absolute;font-size:12px;line-height:14px;white-space:nowrap;right:4.5px;top:1px;transform:scaleX(0.9);transform-origin:100% 0">-7</div></div><div class="a" style="left:325px;top:375px;width:36px;height:15px;background:#e5ff00"><div style="position:absolute;font-size:12px;line-height:14px;white-space:nowrap;right:4.5px;top:1px;transform:scaleX(0.9);transform-origin:100% 0">-18</div></div><div class="a" style="left:362px;top:375px;width:36px;height:15px;background:#beff00"><div style="position:absolute;font-size:12px;line-height:14px;white-space:nowrap;right:4.5px;top:1px;transform:scaleX(0.9);transform-origin:100% 0">-30</div></div><div class="a" style="left:399px;top:375px;width:36px;height:15px;background:#8bff00"><div style="position:absolute;font-size:12px;line-height:14px;white-space:nowrap;right:4.5px;top:1px;transform:scaleX(0.9);transform-origin:100% 0">-46</div></div><div class="a" style="left:436px;top:375px;width:36px;height:15px;background:#8bff00"><div style="position:absolute;font-size:12px;line-height:14px;white-space:nowrap;right:4.5px;top:1px;transform:scaleX(0.9);transform-origin:100% 0">-46</div></div><div class="a" style="left:473px;top:375px;width:36px;height:15px;background:#84ff00"><div style="position:absolute;font-size:12px;line-height:14px;white-space:nowrap;right:4.5px;top:1px;transform:scaleX(0.9);transform-origin:100% 0">-48</div></div><div class="a" style="left:510px;top:375px;width:36px;height:15px;background:#4aff00"><div style="position:absolute;font-size:12px;line-height:14px;white-space:nowrap;right:4.5px;top:1px;transform:scaleX(0.9);transform-origin:100% 0">-66</div></div><div class="a" style="left:547px;top:375px;width:36px;height:15px;background:#4aff00"><div style="position:absolute;font-size:12px;line-height:14px;white-space:nowrap;right:4.5px;top:1px;transform:scaleX(0.9);transform-origin:100% 0">-66</div></div><div class="a" style="left:584px;top:375px;width:36px;height:15px;background:#3dff00"><div style="position:absolute;font-size:12px;line-height:14px;white-space:nowrap;right:4.5px;top:1px;transform:scaleX(0.9);transform-origin:100% 0">-70</div></div><div class="a" style="left:621px;top:375px;width:36px;height:15px;background:#27ff00"><div style="position:absolute;font-size:12px;line-height:14px;white-space:nowrap;right:4.5px;top:1px;transform:scaleX(0.9);transform-origin:100% 0">-77</div></div><div class="a" style="left:658px;top:375px;width:36px;height:15px;background:#0dff00"><div style="position:absolute;font-size:12px;line-height:14px;white-space:nowrap;right:4.5px;top:1px;transform:scaleX(0.9);transform-origin:100% 0">-85</div></div><div class="a" style="left:695px;top:375px;width:36px;height:15px;background:#00ff00"><div style="position:absolute;font-size:12px;line-height:14px;white-space:nowrap;right:4.5px;top:1px;transform:scaleX(0.9);transform-origin:100% 0">-89</div></div><div class="a" style="left:732px;top:375px;width:36px;height:15px;background:#00ff00"><div style="position:absolute;font-size:12px;line-height:14px;white-space:nowrap;right:4.5px;top:1px;transform:scaleX(0.9);transform-origin:100% 0">-89</div></div></body></html>
